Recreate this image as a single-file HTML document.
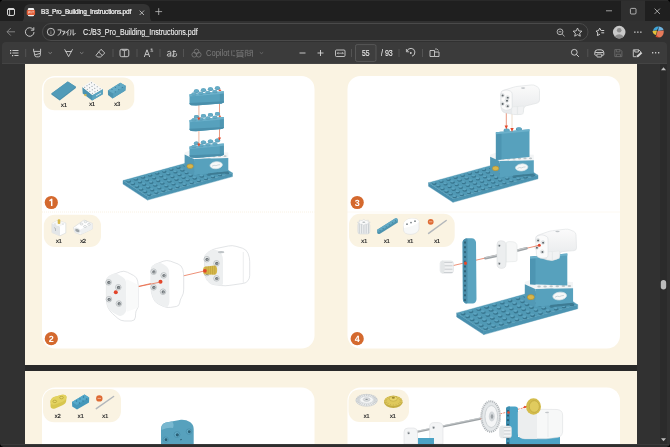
<!DOCTYPE html>
<html><head><meta charset="utf-8"><style>
html,body{margin:0;padding:0;width:670px;height:447px;overflow:hidden;background:#1f1f1f;font-family:'Liberation Sans', sans-serif}
svg{position:absolute;left:0;top:0}
</style></head><body>
<div style="position:absolute;left:0;top:0;width:670px;height:22px;background:#1f1f1f"></div>
<div style="position:absolute;left:621px;top:0;width:24px;height:21px;background:#2f2f2f"></div>
<div style="position:absolute;left:0;top:21px;width:670px;height:426px;background:#313131"></div>
<div style="position:absolute;left:24px;top:4px;width:126px;height:18px;background:#333333;border-radius:6px 6px 0 0"></div>
<div style="position:absolute;left:2px;top:42px;width:665px;height:403px;background:#313131;border-radius:4px;"></div>
<div style="position:absolute;left:2px;top:42px;width:665px;height:21px;background:#3b3b3b;border-radius:4px 4px 0 0;border-bottom:1px solid #444"></div>
<div style="position:absolute;left:0;top:444px;width:670px;height:1px;background:#3a3a3a"></div>
<div style="position:absolute;left:0;top:445px;width:670px;height:2px;background:#2e2e2e"></div>
<svg width="670" height="447" viewBox="0 0 670 447" style="position:absolute;left:0;top:0;will-change:transform;text-rendering:geometricPrecision">
<defs><linearGradient id="wgrad" x1="0" y1="0" x2="0" y2="1"><stop offset="0" stop-color="#fbfbfb"/><stop offset="1" stop-color="#e6e8ea"/></linearGradient><clipPath id="vc"><rect x="3" y="64" width="657" height="380"/></clipPath></defs>
<g clip-path="url(#vc)">
<rect x="25" y="40" width="612" height="325" fill="#faf3e2"/>
<rect x="25" y="365" width="612" height="6" fill="#292929"/>
<rect x="25" y="371" width="612" height="100" fill="#faf3e2"/>
<rect x="42" y="76" width="272.5" height="272.5" rx="13" fill="#fff"/>
<rect x="347.5" y="76" width="272.5" height="272.5" rx="13" fill="#fff"/>
<rect x="42" y="387.5" width="272.5" height="200" rx="13" fill="#fff"/>
<rect x="347.5" y="387.5" width="272.5" height="200" rx="13" fill="#fff"/>
<rect x="43.5" y="77.4" width="90.8" height="32.8" rx="11" fill="#faf3e2"/>
<rect x="43.8" y="214.7" width="57.2" height="32.3" rx="11" fill="#faf3e2"/>
<rect x="349" y="213.8" width="105.7" height="33.2" rx="11" fill="#faf3e2"/>
<rect x="348.5" y="389.6" width="60.5" height="32.4" rx="11" fill="#faf3e2"/>
<rect x="43" y="389" width="78" height="33.3" rx="11" fill="#faf3e2"/>
<line x1="42" y1="212" x2="314.5" y2="212" stroke="#f9f2e4" stroke-width="1" stroke-dasharray="1 1"/>
<line x1="347.5" y1="212" x2="620" y2="212" stroke="#f9f2e4" stroke-width="1" stroke-dasharray="1 1"/>
<circle cx="51.3" cy="202.5" r="6.6" fill="#d4692e"/>
<path d="M49.5 200.9 L51.699999999999996 199.2 V206.0" fill="none" stroke="#fff" stroke-width="1.45" stroke-linejoin="round"/>
<circle cx="51.3" cy="338.7" r="6.6" fill="#d4692e"/>
<text x="51.3" y="341.9" text-anchor="middle" font-family="Liberation Sans" font-weight="bold" font-size="9" fill="#fff">2</text>
<circle cx="357.2" cy="202.5" r="6.6" fill="#d4692e"/>
<text x="357.2" y="205.7" text-anchor="middle" font-family="Liberation Sans" font-weight="bold" font-size="9" fill="#fff">3</text>
<circle cx="357.2" cy="338.7" r="6.6" fill="#d4692e"/>
<text x="357.2" y="341.9" text-anchor="middle" font-family="Liberation Sans" font-weight="bold" font-size="9" fill="#fff">4</text>
<polygon points="123.00,180.50 147.50,196.50 147.50,200.10 123.00,184.10" fill="#478ead" stroke="#478ead" stroke-width="0.4"/>
<polygon points="147.50,196.50 232.50,173.00 232.50,176.60 147.50,200.10" fill="#4c94b1" stroke="#4c94b1" stroke-width="0.4"/>
<polygon points="123.00,180.50 208.00,157.00 232.50,173.00 147.50,196.50" fill="#5099b5" stroke="#5099b5" stroke-width="0.3"/>
<ellipse cx="128.88" cy="181.20" rx="2.1" ry="1.5" fill="#37748d" opacity="0.95"/>
<ellipse cx="128.43" cy="180.40" rx="1.75" ry="1.05" fill="#5ca4c0"/>
<ellipse cx="132.97" cy="183.87" rx="2.1" ry="1.5" fill="#37748d" opacity="0.95"/>
<ellipse cx="132.52" cy="183.07" rx="1.75" ry="1.05" fill="#5ca4c0"/>
<ellipse cx="137.05" cy="186.54" rx="2.1" ry="1.5" fill="#37748d" opacity="0.95"/>
<ellipse cx="136.60" cy="185.74" rx="1.75" ry="1.05" fill="#5ca4c0"/>
<ellipse cx="141.13" cy="189.20" rx="2.1" ry="1.5" fill="#37748d" opacity="0.95"/>
<ellipse cx="140.68" cy="188.40" rx="1.75" ry="1.05" fill="#5ca4c0"/>
<ellipse cx="145.22" cy="191.87" rx="2.1" ry="1.5" fill="#37748d" opacity="0.95"/>
<ellipse cx="144.77" cy="191.07" rx="1.75" ry="1.05" fill="#5ca4c0"/>
<ellipse cx="149.30" cy="194.54" rx="2.1" ry="1.5" fill="#37748d" opacity="0.95"/>
<ellipse cx="148.85" cy="193.74" rx="1.75" ry="1.05" fill="#5ca4c0"/>
<ellipse cx="135.97" cy="179.25" rx="2.1" ry="1.5" fill="#37748d" opacity="0.95"/>
<ellipse cx="135.52" cy="178.45" rx="1.75" ry="1.05" fill="#5ca4c0"/>
<ellipse cx="140.05" cy="181.91" rx="2.1" ry="1.5" fill="#37748d" opacity="0.95"/>
<ellipse cx="139.60" cy="181.11" rx="1.75" ry="1.05" fill="#5ca4c0"/>
<ellipse cx="144.13" cy="184.58" rx="2.1" ry="1.5" fill="#37748d" opacity="0.95"/>
<ellipse cx="143.68" cy="183.78" rx="1.75" ry="1.05" fill="#5ca4c0"/>
<ellipse cx="148.22" cy="187.25" rx="2.1" ry="1.5" fill="#37748d" opacity="0.95"/>
<ellipse cx="147.77" cy="186.45" rx="1.75" ry="1.05" fill="#5ca4c0"/>
<ellipse cx="152.30" cy="189.91" rx="2.1" ry="1.5" fill="#37748d" opacity="0.95"/>
<ellipse cx="151.85" cy="189.11" rx="1.75" ry="1.05" fill="#5ca4c0"/>
<ellipse cx="156.38" cy="192.58" rx="2.1" ry="1.5" fill="#37748d" opacity="0.95"/>
<ellipse cx="155.93" cy="191.78" rx="1.75" ry="1.05" fill="#5ca4c0"/>
<ellipse cx="143.05" cy="177.29" rx="2.1" ry="1.5" fill="#37748d" opacity="0.95"/>
<ellipse cx="142.60" cy="176.49" rx="1.75" ry="1.05" fill="#5ca4c0"/>
<ellipse cx="147.13" cy="179.95" rx="2.1" ry="1.5" fill="#37748d" opacity="0.95"/>
<ellipse cx="146.68" cy="179.15" rx="1.75" ry="1.05" fill="#5ca4c0"/>
<ellipse cx="151.22" cy="182.62" rx="2.1" ry="1.5" fill="#37748d" opacity="0.95"/>
<ellipse cx="150.77" cy="181.82" rx="1.75" ry="1.05" fill="#5ca4c0"/>
<ellipse cx="155.30" cy="185.29" rx="2.1" ry="1.5" fill="#37748d" opacity="0.95"/>
<ellipse cx="154.85" cy="184.49" rx="1.75" ry="1.05" fill="#5ca4c0"/>
<ellipse cx="159.38" cy="187.95" rx="2.1" ry="1.5" fill="#37748d" opacity="0.95"/>
<ellipse cx="158.93" cy="187.15" rx="1.75" ry="1.05" fill="#5ca4c0"/>
<ellipse cx="163.47" cy="190.62" rx="2.1" ry="1.5" fill="#37748d" opacity="0.95"/>
<ellipse cx="163.02" cy="189.82" rx="1.75" ry="1.05" fill="#5ca4c0"/>
<ellipse cx="150.13" cy="175.33" rx="2.1" ry="1.5" fill="#37748d" opacity="0.95"/>
<ellipse cx="149.68" cy="174.53" rx="1.75" ry="1.05" fill="#5ca4c0"/>
<ellipse cx="154.22" cy="178.00" rx="2.1" ry="1.5" fill="#37748d" opacity="0.95"/>
<ellipse cx="153.77" cy="177.20" rx="1.75" ry="1.05" fill="#5ca4c0"/>
<ellipse cx="158.30" cy="180.66" rx="2.1" ry="1.5" fill="#37748d" opacity="0.95"/>
<ellipse cx="157.85" cy="179.86" rx="1.75" ry="1.05" fill="#5ca4c0"/>
<ellipse cx="162.38" cy="183.33" rx="2.1" ry="1.5" fill="#37748d" opacity="0.95"/>
<ellipse cx="161.93" cy="182.53" rx="1.75" ry="1.05" fill="#5ca4c0"/>
<ellipse cx="166.47" cy="186.00" rx="2.1" ry="1.5" fill="#37748d" opacity="0.95"/>
<ellipse cx="166.02" cy="185.20" rx="1.75" ry="1.05" fill="#5ca4c0"/>
<ellipse cx="170.55" cy="188.66" rx="2.1" ry="1.5" fill="#37748d" opacity="0.95"/>
<ellipse cx="170.10" cy="187.86" rx="1.75" ry="1.05" fill="#5ca4c0"/>
<ellipse cx="157.22" cy="173.37" rx="2.1" ry="1.5" fill="#37748d" opacity="0.95"/>
<ellipse cx="156.77" cy="172.57" rx="1.75" ry="1.05" fill="#5ca4c0"/>
<ellipse cx="161.30" cy="176.04" rx="2.1" ry="1.5" fill="#37748d" opacity="0.95"/>
<ellipse cx="160.85" cy="175.24" rx="1.75" ry="1.05" fill="#5ca4c0"/>
<ellipse cx="165.38" cy="178.70" rx="2.1" ry="1.5" fill="#37748d" opacity="0.95"/>
<ellipse cx="164.93" cy="177.90" rx="1.75" ry="1.05" fill="#5ca4c0"/>
<ellipse cx="169.47" cy="181.37" rx="2.1" ry="1.5" fill="#37748d" opacity="0.95"/>
<ellipse cx="169.02" cy="180.57" rx="1.75" ry="1.05" fill="#5ca4c0"/>
<ellipse cx="173.55" cy="184.04" rx="2.1" ry="1.5" fill="#37748d" opacity="0.95"/>
<ellipse cx="173.10" cy="183.24" rx="1.75" ry="1.05" fill="#5ca4c0"/>
<ellipse cx="177.63" cy="186.70" rx="2.1" ry="1.5" fill="#37748d" opacity="0.95"/>
<ellipse cx="177.18" cy="185.90" rx="1.75" ry="1.05" fill="#5ca4c0"/>
<ellipse cx="164.30" cy="171.41" rx="2.1" ry="1.5" fill="#37748d" opacity="0.95"/>
<ellipse cx="163.85" cy="170.61" rx="1.75" ry="1.05" fill="#5ca4c0"/>
<ellipse cx="168.38" cy="174.08" rx="2.1" ry="1.5" fill="#37748d" opacity="0.95"/>
<ellipse cx="167.93" cy="173.28" rx="1.75" ry="1.05" fill="#5ca4c0"/>
<ellipse cx="172.47" cy="176.75" rx="2.1" ry="1.5" fill="#37748d" opacity="0.95"/>
<ellipse cx="172.02" cy="175.95" rx="1.75" ry="1.05" fill="#5ca4c0"/>
<ellipse cx="176.55" cy="179.41" rx="2.1" ry="1.5" fill="#37748d" opacity="0.95"/>
<ellipse cx="176.10" cy="178.61" rx="1.75" ry="1.05" fill="#5ca4c0"/>
<ellipse cx="180.63" cy="182.08" rx="2.1" ry="1.5" fill="#37748d" opacity="0.95"/>
<ellipse cx="180.18" cy="181.28" rx="1.75" ry="1.05" fill="#5ca4c0"/>
<ellipse cx="184.72" cy="184.75" rx="2.1" ry="1.5" fill="#37748d" opacity="0.95"/>
<ellipse cx="184.27" cy="183.95" rx="1.75" ry="1.05" fill="#5ca4c0"/>
<ellipse cx="171.38" cy="169.45" rx="2.1" ry="1.5" fill="#37748d" opacity="0.95"/>
<ellipse cx="170.93" cy="168.65" rx="1.75" ry="1.05" fill="#5ca4c0"/>
<ellipse cx="175.47" cy="172.12" rx="2.1" ry="1.5" fill="#37748d" opacity="0.95"/>
<ellipse cx="175.02" cy="171.32" rx="1.75" ry="1.05" fill="#5ca4c0"/>
<ellipse cx="179.55" cy="174.79" rx="2.1" ry="1.5" fill="#37748d" opacity="0.95"/>
<ellipse cx="179.10" cy="173.99" rx="1.75" ry="1.05" fill="#5ca4c0"/>
<ellipse cx="183.63" cy="177.45" rx="2.1" ry="1.5" fill="#37748d" opacity="0.95"/>
<ellipse cx="183.18" cy="176.65" rx="1.75" ry="1.05" fill="#5ca4c0"/>
<ellipse cx="187.72" cy="180.12" rx="2.1" ry="1.5" fill="#37748d" opacity="0.95"/>
<ellipse cx="187.27" cy="179.32" rx="1.75" ry="1.05" fill="#5ca4c0"/>
<ellipse cx="191.80" cy="182.79" rx="2.1" ry="1.5" fill="#37748d" opacity="0.95"/>
<ellipse cx="191.35" cy="181.99" rx="1.75" ry="1.05" fill="#5ca4c0"/>
<ellipse cx="178.47" cy="167.50" rx="2.1" ry="1.5" fill="#37748d" opacity="0.95"/>
<ellipse cx="178.02" cy="166.70" rx="1.75" ry="1.05" fill="#5ca4c0"/>
<ellipse cx="182.55" cy="170.16" rx="2.1" ry="1.5" fill="#37748d" opacity="0.95"/>
<ellipse cx="182.10" cy="169.36" rx="1.75" ry="1.05" fill="#5ca4c0"/>
<ellipse cx="186.63" cy="172.83" rx="2.1" ry="1.5" fill="#37748d" opacity="0.95"/>
<ellipse cx="186.18" cy="172.03" rx="1.75" ry="1.05" fill="#5ca4c0"/>
<ellipse cx="190.72" cy="175.50" rx="2.1" ry="1.5" fill="#37748d" opacity="0.95"/>
<ellipse cx="190.27" cy="174.70" rx="1.75" ry="1.05" fill="#5ca4c0"/>
<ellipse cx="194.80" cy="178.16" rx="2.1" ry="1.5" fill="#37748d" opacity="0.95"/>
<ellipse cx="194.35" cy="177.36" rx="1.75" ry="1.05" fill="#5ca4c0"/>
<ellipse cx="198.88" cy="180.83" rx="2.1" ry="1.5" fill="#37748d" opacity="0.95"/>
<ellipse cx="198.43" cy="180.03" rx="1.75" ry="1.05" fill="#5ca4c0"/>
<ellipse cx="185.55" cy="165.54" rx="2.1" ry="1.5" fill="#37748d" opacity="0.95"/>
<ellipse cx="185.10" cy="164.74" rx="1.75" ry="1.05" fill="#5ca4c0"/>
<ellipse cx="189.63" cy="168.20" rx="2.1" ry="1.5" fill="#37748d" opacity="0.95"/>
<ellipse cx="189.18" cy="167.40" rx="1.75" ry="1.05" fill="#5ca4c0"/>
<ellipse cx="193.72" cy="170.87" rx="2.1" ry="1.5" fill="#37748d" opacity="0.95"/>
<ellipse cx="193.27" cy="170.07" rx="1.75" ry="1.05" fill="#5ca4c0"/>
<ellipse cx="197.80" cy="173.54" rx="2.1" ry="1.5" fill="#37748d" opacity="0.95"/>
<ellipse cx="197.35" cy="172.74" rx="1.75" ry="1.05" fill="#5ca4c0"/>
<ellipse cx="201.88" cy="176.20" rx="2.1" ry="1.5" fill="#37748d" opacity="0.95"/>
<ellipse cx="201.43" cy="175.40" rx="1.75" ry="1.05" fill="#5ca4c0"/>
<ellipse cx="205.97" cy="178.87" rx="2.1" ry="1.5" fill="#37748d" opacity="0.95"/>
<ellipse cx="205.52" cy="178.07" rx="1.75" ry="1.05" fill="#5ca4c0"/>
<ellipse cx="192.63" cy="163.58" rx="2.1" ry="1.5" fill="#37748d" opacity="0.95"/>
<ellipse cx="192.18" cy="162.78" rx="1.75" ry="1.05" fill="#5ca4c0"/>
<ellipse cx="196.72" cy="166.25" rx="2.1" ry="1.5" fill="#37748d" opacity="0.95"/>
<ellipse cx="196.27" cy="165.45" rx="1.75" ry="1.05" fill="#5ca4c0"/>
<ellipse cx="200.80" cy="168.91" rx="2.1" ry="1.5" fill="#37748d" opacity="0.95"/>
<ellipse cx="200.35" cy="168.11" rx="1.75" ry="1.05" fill="#5ca4c0"/>
<ellipse cx="204.88" cy="171.58" rx="2.1" ry="1.5" fill="#37748d" opacity="0.95"/>
<ellipse cx="204.43" cy="170.78" rx="1.75" ry="1.05" fill="#5ca4c0"/>
<ellipse cx="208.97" cy="174.25" rx="2.1" ry="1.5" fill="#37748d" opacity="0.95"/>
<ellipse cx="208.52" cy="173.45" rx="1.75" ry="1.05" fill="#5ca4c0"/>
<ellipse cx="213.05" cy="176.91" rx="2.1" ry="1.5" fill="#37748d" opacity="0.95"/>
<ellipse cx="212.60" cy="176.11" rx="1.75" ry="1.05" fill="#5ca4c0"/>
<ellipse cx="199.72" cy="161.62" rx="2.1" ry="1.5" fill="#37748d" opacity="0.95"/>
<ellipse cx="199.27" cy="160.82" rx="1.75" ry="1.05" fill="#5ca4c0"/>
<ellipse cx="203.80" cy="164.29" rx="2.1" ry="1.5" fill="#37748d" opacity="0.95"/>
<ellipse cx="203.35" cy="163.49" rx="1.75" ry="1.05" fill="#5ca4c0"/>
<ellipse cx="207.88" cy="166.95" rx="2.1" ry="1.5" fill="#37748d" opacity="0.95"/>
<ellipse cx="207.43" cy="166.15" rx="1.75" ry="1.05" fill="#5ca4c0"/>
<ellipse cx="211.97" cy="169.62" rx="2.1" ry="1.5" fill="#37748d" opacity="0.95"/>
<ellipse cx="211.52" cy="168.82" rx="1.75" ry="1.05" fill="#5ca4c0"/>
<ellipse cx="216.05" cy="172.29" rx="2.1" ry="1.5" fill="#37748d" opacity="0.95"/>
<ellipse cx="215.60" cy="171.49" rx="1.75" ry="1.05" fill="#5ca4c0"/>
<ellipse cx="220.13" cy="174.95" rx="2.1" ry="1.5" fill="#37748d" opacity="0.95"/>
<ellipse cx="219.68" cy="174.15" rx="1.75" ry="1.05" fill="#5ca4c0"/>
<ellipse cx="206.80" cy="159.66" rx="2.1" ry="1.5" fill="#37748d" opacity="0.95"/>
<ellipse cx="206.35" cy="158.86" rx="1.75" ry="1.05" fill="#5ca4c0"/>
<ellipse cx="210.88" cy="162.33" rx="2.1" ry="1.5" fill="#37748d" opacity="0.95"/>
<ellipse cx="210.43" cy="161.53" rx="1.75" ry="1.05" fill="#5ca4c0"/>
<ellipse cx="214.97" cy="165.00" rx="2.1" ry="1.5" fill="#37748d" opacity="0.95"/>
<ellipse cx="214.52" cy="164.20" rx="1.75" ry="1.05" fill="#5ca4c0"/>
<ellipse cx="219.05" cy="167.66" rx="2.1" ry="1.5" fill="#37748d" opacity="0.95"/>
<ellipse cx="218.60" cy="166.86" rx="1.75" ry="1.05" fill="#5ca4c0"/>
<ellipse cx="223.13" cy="170.33" rx="2.1" ry="1.5" fill="#37748d" opacity="0.95"/>
<ellipse cx="222.68" cy="169.53" rx="1.75" ry="1.05" fill="#5ca4c0"/>
<ellipse cx="227.22" cy="173.00" rx="2.1" ry="1.5" fill="#37748d" opacity="0.95"/>
<ellipse cx="226.77" cy="172.20" rx="1.75" ry="1.05" fill="#5ca4c0"/>
<polygon points="184.60,152.60 190.00,150.50 228.30,152.50 228.30,158.10 194.10,158.90 184.60,154.60" fill="#f3f5f6" />
<ellipse cx="197.50" cy="156.60" rx="1.6" ry="0.9" fill="#a9b3b7" opacity="0.75"/>
<ellipse cx="203.00" cy="156.50" rx="1.6" ry="0.9" fill="#a9b3b7" opacity="0.75"/>
<ellipse cx="208.50" cy="156.40" rx="1.6" ry="0.9" fill="#a9b3b7" opacity="0.75"/>
<ellipse cx="214.00" cy="156.30" rx="1.6" ry="0.9" fill="#a9b3b7" opacity="0.75"/>
<ellipse cx="219.50" cy="156.20" rx="1.6" ry="0.9" fill="#a9b3b7" opacity="0.75"/>
<ellipse cx="225.00" cy="156.10" rx="1.6" ry="0.9" fill="#a9b3b7" opacity="0.75"/>
<polygon points="184.60,154.60 194.10,158.90 194.10,175.20 184.60,170.40" fill="#5299b5" />
<polygon points="194.10,158.90 228.30,158.10 228.30,171.40 207.20,173.60 194.10,175.20" fill="#57a1bd" />
<polygon points="207.60,173.40 228.30,171.20 228.30,173.20 207.60,175.30" fill="#3d7b93" />
<ellipse cx="216.2" cy="165.2" rx="6.2" ry="3.5" transform="rotate(-6 216.2 165.2)" fill="#f6f8f8" stroke="#d5e3e8" stroke-width="0.7"/>
<path d="M212 166.2 q2 -1.5 4 -0.5 q2 -1 4 -1" stroke="#b0c2c9" stroke-width="0.6" fill="none"/>
<ellipse cx="190.1" cy="166.2" rx="3.2" ry="2.3" fill="#d9b64a" stroke="#a8852a" stroke-width="0.5"/>
<ellipse cx="196.50" cy="143.50" rx="2.7" ry="1.9" fill="#5a9db8"/>
<ellipse cx="196.30" cy="143.10" rx="2.4" ry="1.5" fill="#66acc6"/>
<ellipse cx="203.50" cy="142.50" rx="2.7" ry="1.9" fill="#5a9db8"/>
<ellipse cx="203.30" cy="142.10" rx="2.4" ry="1.5" fill="#66acc6"/>
<ellipse cx="210.50" cy="141.50" rx="2.7" ry="1.9" fill="#5a9db8"/>
<ellipse cx="210.30" cy="141.10" rx="2.4" ry="1.5" fill="#66acc6"/>
<ellipse cx="217.50" cy="140.50" rx="2.7" ry="1.9" fill="#5a9db8"/>
<ellipse cx="217.30" cy="140.10" rx="2.4" ry="1.5" fill="#66acc6"/>
<polygon points="189.50,146.60 223.80,143.60 223.80,154.70 221.50,155.70 196.00,157.90 191.00,157.50 189.50,156.30" fill="#57a1bd" />
<polygon points="189.50,146.60 223.80,143.60 223.80,145.70 219.80,146.30 189.50,148.90" fill="#6cb1cb" />
<polygon points="219.80,146.30 223.80,145.70 223.80,154.70 221.50,155.70 219.80,155.90" fill="#4f96b2" />
<polygon points="189.50,155.30 219.80,153.90 223.80,153.60 223.80,154.70 221.50,155.70 196.00,157.90 191.00,157.50 189.50,156.30" fill="#4a8fab" />
<ellipse cx="194.00" cy="146.50" rx="2.6" ry="1.6" fill="#5a9db8"/>
<ellipse cx="193.80" cy="146.10" rx="2.3" ry="1.2" fill="#66acc6"/>
<ellipse cx="201.00" cy="145.65" rx="2.6" ry="1.6" fill="#5a9db8"/>
<ellipse cx="200.80" cy="145.25" rx="2.3" ry="1.2" fill="#66acc6"/>
<ellipse cx="208.00" cy="144.80" rx="2.6" ry="1.6" fill="#5a9db8"/>
<ellipse cx="207.80" cy="144.40" rx="2.3" ry="1.2" fill="#66acc6"/>
<ellipse cx="215.00" cy="143.95" rx="2.6" ry="1.6" fill="#5a9db8"/>
<ellipse cx="214.80" cy="143.55" rx="2.3" ry="1.2" fill="#66acc6"/>
<line x1="198.9" y1="103.5" x2="198.9" y2="146" stroke="#eba386" stroke-width="0.8"/>
<line x1="219.5" y1="100.5" x2="219.5" y2="140" stroke="#e0704c" stroke-width="0.7"/>
<ellipse cx="196.50" cy="91.20" rx="2.7" ry="1.9" fill="#5a9db8"/>
<ellipse cx="196.30" cy="90.80" rx="2.4" ry="1.5" fill="#66acc6"/>
<ellipse cx="203.50" cy="90.20" rx="2.7" ry="1.9" fill="#5a9db8"/>
<ellipse cx="203.30" cy="89.80" rx="2.4" ry="1.5" fill="#66acc6"/>
<ellipse cx="210.50" cy="89.20" rx="2.7" ry="1.9" fill="#5a9db8"/>
<ellipse cx="210.30" cy="88.80" rx="2.4" ry="1.5" fill="#66acc6"/>
<ellipse cx="217.50" cy="88.20" rx="2.7" ry="1.9" fill="#5a9db8"/>
<ellipse cx="217.30" cy="87.80" rx="2.4" ry="1.5" fill="#66acc6"/>
<polygon points="189.50,94.30 223.80,91.30 223.80,102.40 221.50,103.40 196.00,105.60 191.00,105.20 189.50,104.00" fill="#57a1bd" />
<polygon points="189.50,94.30 223.80,91.30 223.80,93.40 219.80,94.00 189.50,96.60" fill="#6cb1cb" />
<polygon points="219.80,94.00 223.80,93.40 223.80,102.40 221.50,103.40 219.80,103.60" fill="#4f96b2" />
<polygon points="189.50,103.00 219.80,101.60 223.80,101.30 223.80,102.40 221.50,103.40 196.00,105.60 191.00,105.20 189.50,104.00" fill="#4a8fab" />
<ellipse cx="194.00" cy="94.20" rx="2.6" ry="1.6" fill="#5a9db8"/>
<ellipse cx="193.80" cy="93.80" rx="2.3" ry="1.2" fill="#66acc6"/>
<ellipse cx="201.00" cy="93.35" rx="2.6" ry="1.6" fill="#5a9db8"/>
<ellipse cx="200.80" cy="92.95" rx="2.3" ry="1.2" fill="#66acc6"/>
<ellipse cx="208.00" cy="92.50" rx="2.6" ry="1.6" fill="#5a9db8"/>
<ellipse cx="207.80" cy="92.10" rx="2.3" ry="1.2" fill="#66acc6"/>
<ellipse cx="215.00" cy="91.65" rx="2.6" ry="1.6" fill="#5a9db8"/>
<ellipse cx="214.80" cy="91.25" rx="2.3" ry="1.2" fill="#66acc6"/>
<ellipse cx="196.50" cy="116.90" rx="2.7" ry="1.9" fill="#5a9db8"/>
<ellipse cx="196.30" cy="116.50" rx="2.4" ry="1.5" fill="#66acc6"/>
<ellipse cx="203.50" cy="115.90" rx="2.7" ry="1.9" fill="#5a9db8"/>
<ellipse cx="203.30" cy="115.50" rx="2.4" ry="1.5" fill="#66acc6"/>
<ellipse cx="210.50" cy="114.90" rx="2.7" ry="1.9" fill="#5a9db8"/>
<ellipse cx="210.30" cy="114.50" rx="2.4" ry="1.5" fill="#66acc6"/>
<ellipse cx="217.50" cy="113.90" rx="2.7" ry="1.9" fill="#5a9db8"/>
<ellipse cx="217.30" cy="113.50" rx="2.4" ry="1.5" fill="#66acc6"/>
<polygon points="189.50,120.00 223.80,117.00 223.80,128.10 221.50,129.10 196.00,131.30 191.00,130.90 189.50,129.70" fill="#57a1bd" />
<polygon points="189.50,120.00 223.80,117.00 223.80,119.10 219.80,119.70 189.50,122.30" fill="#6cb1cb" />
<polygon points="219.80,119.70 223.80,119.10 223.80,128.10 221.50,129.10 219.80,129.30" fill="#4f96b2" />
<polygon points="189.50,128.70 219.80,127.30 223.80,127.00 223.80,128.10 221.50,129.10 196.00,131.30 191.00,130.90 189.50,129.70" fill="#4a8fab" />
<ellipse cx="194.00" cy="119.90" rx="2.6" ry="1.6" fill="#5a9db8"/>
<ellipse cx="193.80" cy="119.50" rx="2.3" ry="1.2" fill="#66acc6"/>
<ellipse cx="201.00" cy="119.05" rx="2.6" ry="1.6" fill="#5a9db8"/>
<ellipse cx="200.80" cy="118.65" rx="2.3" ry="1.2" fill="#66acc6"/>
<ellipse cx="208.00" cy="118.20" rx="2.6" ry="1.6" fill="#5a9db8"/>
<ellipse cx="207.80" cy="117.80" rx="2.3" ry="1.2" fill="#66acc6"/>
<ellipse cx="215.00" cy="117.35" rx="2.6" ry="1.6" fill="#5a9db8"/>
<ellipse cx="214.80" cy="116.95" rx="2.3" ry="1.2" fill="#66acc6"/>
<path d="M197.3 117.5 L200.5 117.5 L198.9 120.5 Z" fill="#e5482a"/>
<path d="M197.3 143.5 L200.5 143.5 L198.9 146.5 Z" fill="#e5482a"/>
<path d="M217.9 137.5 L221.1 137.5 L219.5 140.5 Z" fill="#e5482a"/>
<ellipse cx="219.9" cy="90.3" rx="1.4" ry="0.8" fill="#e64020"/>
<ellipse cx="219.9" cy="116.3" rx="1.2" ry="0.7" fill="#e06040"/>
<polygon points="51.40,93.40 67.80,81.40 75.90,86.70 75.90,88.00 59.70,100.60 51.40,94.60" fill="#4a8fab" />
<polygon points="51.40,93.40 67.80,81.40 75.90,86.70 59.70,99.30" fill="#519bb8" />
<polygon points="82.30,86.90 82.70,93.50 92.00,100.50 102.80,94.30 102.80,88.90 92.40,95.10" fill="#4a93b0" />
<polygon points="92.40,95.10 102.80,88.90 102.80,94.30 92.00,100.50" fill="#5aa4c0" />
<polygon points="82.30,86.90 91.20,81.10 102.80,88.90 92.40,95.10" fill="#f7f8f8" />
<circle cx="84.70" cy="87.19" r="0.55" fill="#7d8a90"/>
<circle cx="87.27" cy="89.23" r="0.55" fill="#7d8a90"/>
<circle cx="89.84" cy="91.27" r="0.55" fill="#7d8a90"/>
<circle cx="92.41" cy="93.31" r="0.55" fill="#7d8a90"/>
<circle cx="86.97" cy="85.73" r="0.55" fill="#7d8a90"/>
<circle cx="89.64" cy="87.74" r="0.55" fill="#7d8a90"/>
<circle cx="92.30" cy="89.76" r="0.55" fill="#7d8a90"/>
<circle cx="94.97" cy="91.77" r="0.55" fill="#7d8a90"/>
<circle cx="89.24" cy="84.27" r="0.55" fill="#7d8a90"/>
<circle cx="92.00" cy="86.26" r="0.55" fill="#7d8a90"/>
<circle cx="94.76" cy="88.24" r="0.55" fill="#7d8a90"/>
<circle cx="97.52" cy="90.23" r="0.55" fill="#7d8a90"/>
<circle cx="91.51" cy="82.81" r="0.55" fill="#7d8a90"/>
<circle cx="94.37" cy="84.77" r="0.55" fill="#7d8a90"/>
<circle cx="97.22" cy="86.73" r="0.55" fill="#7d8a90"/>
<circle cx="100.07" cy="88.69" r="0.55" fill="#7d8a90"/>
<ellipse cx="85.4" cy="95.1" rx="1.3" ry="1.1" fill="#d7b94c"/>
<path d="M96 96 L101 93" stroke="#e8eef0" stroke-width="0.8"/>
<polygon points="107.90,90.40 120.30,82.70 125.70,85.80 125.40,90.50 112.50,98.40 108.00,95.00" fill="#4d93af" />
<polygon points="113.30,93.50 125.70,85.80 125.40,90.50 112.50,98.40" fill="#57a1bd" />
<polygon points="107.90,90.40 120.30,82.70 125.70,85.80 113.30,93.50" fill="#63abc6" />
<circle cx="112" cy="89.5" r="0.6" fill="#2f7090" opacity="0.8"/>
<circle cx="115.5" cy="87.3" r="0.6" fill="#2f7090" opacity="0.8"/>
<circle cx="119" cy="85.1" r="0.6" fill="#2f7090" opacity="0.8"/>
<circle cx="115.3" cy="91.8" r="0.6" fill="#2f7090" opacity="0.8"/>
<circle cx="118.8" cy="89.6" r="0.6" fill="#2f7090" opacity="0.8"/>
<circle cx="122.3" cy="87.4" r="0.6" fill="#2f7090" opacity="0.8"/>
<text x="60.8" y="106.9" font-family="Liberation Sans" font-weight="bold" font-size="6" letter-spacing="-0.4" fill="#333333">x1</text>
<text x="88.9" y="106.3" font-family="Liberation Sans" font-weight="bold" font-size="6" letter-spacing="-0.4" fill="#333333">x1</text>
<text x="114.1" y="106.3" font-family="Liberation Sans" font-weight="bold" font-size="6" letter-spacing="-0.4" fill="#333333">x3</text>
<polygon points="52.00,223.50 57.50,220.50 65.80,223.00 65.80,233.00 60.00,235.80 52.00,232.50" fill="#ffffff" stroke="#d3d6d8" stroke-width="0.6" stroke-linejoin="round"/>
<polygon points="52.00,223.50 60.00,226.50 60.00,235.80 52.00,232.50" fill="#e3e6e8" />
<polygon points="52.00,223.50 57.50,220.50 65.80,223.00 60.00,226.50" fill="#f6f7f7" />
<rect x="57.7" y="219.2" width="2.6" height="4.8" rx="1" fill="#d7b94c"/>
<circle cx="55" cy="224" r="0.6" fill="#b8bcbf"/><circle cx="63" cy="224" r="0.6" fill="#b8bcbf"/>
<path d="M54 227.5 L55.5 228.5 L55.5 231" stroke="#9aa0a4" stroke-width="0.6" fill="none"/>
<polygon points="73.40,227.50 84.00,220.00 92.40,223.50 92.40,229.00 80.50,234.60 75.00,232.50" fill="#ffffff" stroke="#d3d6d8" stroke-width="0.6" stroke-linejoin="round"/>
<polygon points="80.50,229.50 92.40,223.50 92.40,229.00 80.50,234.60" fill="#eef0f1" />
<ellipse cx="77.3" cy="230.5" rx="3.3" ry="2.3" transform="rotate(25 77.3 230.5)" fill="#d8dcde" stroke="#eef0f1" stroke-width="0.6"/>
<ellipse cx="77.3" cy="230.5" rx="2.2" ry="1.3" transform="rotate(25 77.3 230.5)" fill="#9ba2a6"/>
<ellipse cx="81.5" cy="224" rx="1.5" ry="1" fill="#f7f8f8" stroke="#b9bec1" stroke-width="0.5"/>
<ellipse cx="85.5" cy="221.8" rx="1.5" ry="1" fill="#f7f8f8" stroke="#b9bec1" stroke-width="0.5"/>
<ellipse cx="85" cy="226.5" rx="1.5" ry="1" fill="#f7f8f8" stroke="#b9bec1" stroke-width="0.5"/>
<ellipse cx="89" cy="224.3" rx="1.5" ry="1" fill="#f7f8f8" stroke="#b9bec1" stroke-width="0.5"/>
<text x="55.7" y="242.6" font-family="Liberation Sans" font-weight="bold" font-size="6" letter-spacing="-0.4" fill="#333333">x1</text>
<text x="79.9" y="242.6" font-family="Liberation Sans" font-weight="bold" font-size="6" letter-spacing="-0.4" fill="#333333">x2</text>
<line x1="116" y1="291.7" x2="205" y2="270.8" stroke="#e5603c" stroke-width="0.7"/>
<path d="M204.41 259.10 Q204.30 255.10 207.55 252.77 L209.15 251.63 Q212.40 249.30 216.32 248.49 L228.28 246.01 Q232.20 245.20 236.04 246.32 L242.36 248.18 Q246.20 249.30 247.79 252.97 L248.11 253.73 Q249.70 257.40 249.70 261.40 L249.70 275.51 Q249.70 278.40 247.95 280.70 L247.95 280.70 Q246.20 283.00 243.34 283.41 L229.16 285.43 Q225.20 286.00 221.23 285.53 L214.07 284.67 Q210.10 284.20 207.71 280.99 L207.29 280.41 Q204.90 277.20 204.79 273.20 Z" fill="#ffffff" stroke="#d6d9db" stroke-width="0.7"/>
<path d="M204.38 258.10 Q204.30 255.10 206.74 253.35 L209.96 251.05 Q212.40 249.30 215.33 249.95 L217.07 250.35 Q220.00 251.00 221.34 253.68 L221.66 254.32 Q223.00 257.00 223.00 260.00 L223.00 282.70 Q223.00 285.70 220.02 285.35 L213.08 284.55 Q210.10 284.20 208.31 281.79 L206.69 279.61 Q204.90 277.20 204.82 274.20 Z" fill="#edeff0" />
<line x1="243.3" y1="252" x2="243.3" y2="283" stroke="#e4e7e8" stroke-width="0.7"/>
<ellipse cx="221.2" cy="252.2" rx="3.2" ry="1.1" fill="#c0c5c8"/>
<circle cx="206.80" cy="259.20" r="2.80" fill="#eceeef" stroke="#b3b8bb" stroke-width="0.75"/><circle cx="207.05" cy="259.40" r="1.68" fill="#6c7377"/><circle cx="207.35" cy="259.70" r="0.84" fill="#9ca1a4"/>
<circle cx="216.50" cy="263.30" r="2.80" fill="#eceeef" stroke="#b3b8bb" stroke-width="0.75"/><circle cx="216.75" cy="263.50" r="1.68" fill="#6c7377"/><circle cx="217.05" cy="263.80" r="0.84" fill="#9ca1a4"/>
<circle cx="206.80" cy="273.10" r="2.80" fill="#eceeef" stroke="#b3b8bb" stroke-width="0.75"/><circle cx="207.05" cy="273.30" r="1.68" fill="#6c7377"/><circle cx="207.35" cy="273.60" r="0.84" fill="#9ca1a4"/>
<circle cx="216.50" cy="278.40" r="2.80" fill="#eceeef" stroke="#b3b8bb" stroke-width="0.75"/><circle cx="216.75" cy="278.60" r="1.68" fill="#6c7377"/><circle cx="217.05" cy="278.90" r="0.84" fill="#9ca1a4"/>
<path d="M203.30 268.49 Q203.50 267.00 204.99 266.79 L214.15 265.49 Q215.50 265.30 216.30 266.40 L216.30 266.40 Q217.10 267.50 217.10 268.86 L217.10 271.06 Q217.10 272.50 216.30 273.70 L216.30 273.70 Q215.50 274.90 214.06 274.83 L205.00 274.37 Q203.50 274.30 203.36 272.81 L203.24 271.49 Q203.10 270.00 203.30 268.51 Z" fill="#d7b94c" />
<line x1="206.0" y1="266" x2="206.0" y2="274.5" stroke="#b39532" stroke-width="0.5"/>
<line x1="208.2" y1="266" x2="208.2" y2="274.5" stroke="#b39532" stroke-width="0.5"/>
<line x1="210.4" y1="266" x2="210.4" y2="274.5" stroke="#b39532" stroke-width="0.5"/>
<line x1="212.6" y1="266" x2="212.6" y2="274.5" stroke="#b39532" stroke-width="0.5"/>
<line x1="214.8" y1="266" x2="214.8" y2="274.5" stroke="#b39532" stroke-width="0.5"/>
<circle cx="204.9" cy="270.8" r="1.9" fill="#e2452a"/>
<path d="M151.10 270.00 Q151.10 266.00 154.82 264.53 L163.08 261.27 Q166.80 259.80 170.55 261.20 L178.05 264.00 Q181.80 265.40 182.71 269.29 L182.79 269.61 Q183.70 273.50 183.70 277.50 L183.70 289.95 Q183.70 293.60 181.85 296.75 L181.55 297.25 Q180.00 299.90 179.65 302.95 L179.65 302.95 Q179.30 306.00 176.27 306.49 L170.75 307.37 Q166.80 308.00 163.18 306.30 L158.52 304.10 Q154.90 302.40 153.49 298.66 L152.51 296.04 Q151.10 292.30 151.10 288.30 Z" fill="#ffffff" stroke="#d6d9db" stroke-width="0.7"/>
<path d="M151.10 270.00 Q151.10 266.00 154.75 264.36 L156.35 263.64 Q160.00 262.00 163.33 264.22 L165.67 265.78 Q169.00 268.00 169.06 272.00 L169.47 301.59 Q169.50 304.00 168.15 306.00 L168.15 306.00 Q166.80 308.00 164.62 306.97 L158.52 304.10 Q154.90 302.40 153.49 298.66 L152.51 296.04 Q151.10 292.30 151.10 288.30 Z" fill="#eef0f1" />
<circle cx="153.60" cy="271.70" r="2.80" fill="#eceeef" stroke="#b3b8bb" stroke-width="0.75"/><circle cx="153.85" cy="271.90" r="1.68" fill="#6c7377"/><circle cx="154.15" cy="272.20" r="0.84" fill="#9ca1a4"/>
<circle cx="163.70" cy="275.40" r="2.80" fill="#eceeef" stroke="#b3b8bb" stroke-width="0.75"/><circle cx="163.95" cy="275.60" r="1.68" fill="#6c7377"/><circle cx="164.25" cy="275.90" r="0.84" fill="#9ca1a4"/>
<circle cx="153.60" cy="287.30" r="2.80" fill="#eceeef" stroke="#b3b8bb" stroke-width="0.75"/><circle cx="153.85" cy="287.50" r="1.68" fill="#6c7377"/><circle cx="154.15" cy="287.80" r="0.84" fill="#9ca1a4"/>
<circle cx="163.00" cy="291.70" r="2.80" fill="#eceeef" stroke="#b3b8bb" stroke-width="0.75"/><circle cx="163.25" cy="291.90" r="1.68" fill="#6c7377"/><circle cx="163.55" cy="292.20" r="0.84" fill="#9ca1a4"/>
<circle cx="160.5" cy="281.7" r="2" fill="#e2452a"/>
<line x1="139" y1="286.5" x2="160.7" y2="282" stroke="#e5603c" stroke-width="0.7"/>
<path d="M106.40 281.30 Q106.40 277.30 110.12 275.83 L120.18 271.87 Q123.90 270.40 127.44 272.25 L133.73 275.54 Q137.10 277.30 137.70 281.05 L137.70 281.05 Q138.30 284.80 138.30 288.60 L138.30 305.21 Q138.30 307.40 137.05 309.20 L137.05 309.20 Q135.80 311.00 135.67 313.19 L135.44 317.01 Q135.20 321.00 131.20 321.00 L124.80 321.00 Q120.80 321.00 117.80 318.35 L112.50 313.65 Q109.50 311.00 107.95 307.31 L107.95 307.29 Q106.40 303.60 106.40 299.60 Z" fill="#ffffff" stroke="#d6d9db" stroke-width="0.7"/>
<path d="M106.40 281.30 Q106.40 277.30 109.89 275.35 L111.51 274.45 Q115.00 272.50 118.44 274.53 L122.56 276.97 Q126.00 279.00 126.06 283.00 L126.44 308.28 Q126.50 312.00 123.75 314.50 L123.75 314.50 Q121.00 317.00 117.70 315.28 L113.05 312.85 Q109.50 311.00 107.95 307.31 L107.95 307.29 Q106.40 303.60 106.40 299.60 Z" fill="#eef0f1" />
<path d="M126.03 281.00 Q126.00 279.00 127.81 279.85 L136.49 283.95 Q138.30 284.80 138.30 286.80 L138.30 305.40 Q138.30 307.40 136.44 308.13 L128.36 311.27 Q126.50 312.00 126.47 310.00 Z" fill="#f9fafa" />
<circle cx="108.60" cy="282.30" r="2.80" fill="#eceeef" stroke="#b3b8bb" stroke-width="0.75"/><circle cx="108.85" cy="282.50" r="1.68" fill="#6c7377"/><circle cx="109.15" cy="282.80" r="0.84" fill="#9ca1a4"/>
<circle cx="118.30" cy="287.30" r="2.80" fill="#eceeef" stroke="#b3b8bb" stroke-width="0.75"/><circle cx="118.55" cy="287.50" r="1.68" fill="#6c7377"/><circle cx="118.85" cy="287.80" r="0.84" fill="#9ca1a4"/>
<circle cx="108.90" cy="299.20" r="2.80" fill="#eceeef" stroke="#b3b8bb" stroke-width="0.75"/><circle cx="109.15" cy="299.40" r="1.68" fill="#6c7377"/><circle cx="109.45" cy="299.70" r="0.84" fill="#9ca1a4"/>
<circle cx="118.90" cy="303.60" r="2.80" fill="#eceeef" stroke="#b3b8bb" stroke-width="0.75"/><circle cx="119.15" cy="303.80" r="1.68" fill="#6c7377"/><circle cx="119.45" cy="304.10" r="0.84" fill="#9ca1a4"/>
<circle cx="115.8" cy="292.3" r="2" fill="#e2452a"/>
<g transform="translate(305.5,2.2)"><polygon points="123.00,180.50 147.50,196.50 147.50,200.10 123.00,184.10" fill="#478ead" stroke="#478ead" stroke-width="0.4"/>
<polygon points="147.50,196.50 232.50,173.00 232.50,176.60 147.50,200.10" fill="#4c94b1" stroke="#4c94b1" stroke-width="0.4"/>
<polygon points="123.00,180.50 208.00,157.00 232.50,173.00 147.50,196.50" fill="#5099b5" stroke="#5099b5" stroke-width="0.3"/>
<ellipse cx="128.88" cy="181.20" rx="2.1" ry="1.5" fill="#37748d" opacity="0.95"/>
<ellipse cx="128.43" cy="180.40" rx="1.75" ry="1.05" fill="#5ca4c0"/>
<ellipse cx="132.97" cy="183.87" rx="2.1" ry="1.5" fill="#37748d" opacity="0.95"/>
<ellipse cx="132.52" cy="183.07" rx="1.75" ry="1.05" fill="#5ca4c0"/>
<ellipse cx="137.05" cy="186.54" rx="2.1" ry="1.5" fill="#37748d" opacity="0.95"/>
<ellipse cx="136.60" cy="185.74" rx="1.75" ry="1.05" fill="#5ca4c0"/>
<ellipse cx="141.13" cy="189.20" rx="2.1" ry="1.5" fill="#37748d" opacity="0.95"/>
<ellipse cx="140.68" cy="188.40" rx="1.75" ry="1.05" fill="#5ca4c0"/>
<ellipse cx="145.22" cy="191.87" rx="2.1" ry="1.5" fill="#37748d" opacity="0.95"/>
<ellipse cx="144.77" cy="191.07" rx="1.75" ry="1.05" fill="#5ca4c0"/>
<ellipse cx="149.30" cy="194.54" rx="2.1" ry="1.5" fill="#37748d" opacity="0.95"/>
<ellipse cx="148.85" cy="193.74" rx="1.75" ry="1.05" fill="#5ca4c0"/>
<ellipse cx="135.97" cy="179.25" rx="2.1" ry="1.5" fill="#37748d" opacity="0.95"/>
<ellipse cx="135.52" cy="178.45" rx="1.75" ry="1.05" fill="#5ca4c0"/>
<ellipse cx="140.05" cy="181.91" rx="2.1" ry="1.5" fill="#37748d" opacity="0.95"/>
<ellipse cx="139.60" cy="181.11" rx="1.75" ry="1.05" fill="#5ca4c0"/>
<ellipse cx="144.13" cy="184.58" rx="2.1" ry="1.5" fill="#37748d" opacity="0.95"/>
<ellipse cx="143.68" cy="183.78" rx="1.75" ry="1.05" fill="#5ca4c0"/>
<ellipse cx="148.22" cy="187.25" rx="2.1" ry="1.5" fill="#37748d" opacity="0.95"/>
<ellipse cx="147.77" cy="186.45" rx="1.75" ry="1.05" fill="#5ca4c0"/>
<ellipse cx="152.30" cy="189.91" rx="2.1" ry="1.5" fill="#37748d" opacity="0.95"/>
<ellipse cx="151.85" cy="189.11" rx="1.75" ry="1.05" fill="#5ca4c0"/>
<ellipse cx="156.38" cy="192.58" rx="2.1" ry="1.5" fill="#37748d" opacity="0.95"/>
<ellipse cx="155.93" cy="191.78" rx="1.75" ry="1.05" fill="#5ca4c0"/>
<ellipse cx="143.05" cy="177.29" rx="2.1" ry="1.5" fill="#37748d" opacity="0.95"/>
<ellipse cx="142.60" cy="176.49" rx="1.75" ry="1.05" fill="#5ca4c0"/>
<ellipse cx="147.13" cy="179.95" rx="2.1" ry="1.5" fill="#37748d" opacity="0.95"/>
<ellipse cx="146.68" cy="179.15" rx="1.75" ry="1.05" fill="#5ca4c0"/>
<ellipse cx="151.22" cy="182.62" rx="2.1" ry="1.5" fill="#37748d" opacity="0.95"/>
<ellipse cx="150.77" cy="181.82" rx="1.75" ry="1.05" fill="#5ca4c0"/>
<ellipse cx="155.30" cy="185.29" rx="2.1" ry="1.5" fill="#37748d" opacity="0.95"/>
<ellipse cx="154.85" cy="184.49" rx="1.75" ry="1.05" fill="#5ca4c0"/>
<ellipse cx="159.38" cy="187.95" rx="2.1" ry="1.5" fill="#37748d" opacity="0.95"/>
<ellipse cx="158.93" cy="187.15" rx="1.75" ry="1.05" fill="#5ca4c0"/>
<ellipse cx="163.47" cy="190.62" rx="2.1" ry="1.5" fill="#37748d" opacity="0.95"/>
<ellipse cx="163.02" cy="189.82" rx="1.75" ry="1.05" fill="#5ca4c0"/>
<ellipse cx="150.13" cy="175.33" rx="2.1" ry="1.5" fill="#37748d" opacity="0.95"/>
<ellipse cx="149.68" cy="174.53" rx="1.75" ry="1.05" fill="#5ca4c0"/>
<ellipse cx="154.22" cy="178.00" rx="2.1" ry="1.5" fill="#37748d" opacity="0.95"/>
<ellipse cx="153.77" cy="177.20" rx="1.75" ry="1.05" fill="#5ca4c0"/>
<ellipse cx="158.30" cy="180.66" rx="2.1" ry="1.5" fill="#37748d" opacity="0.95"/>
<ellipse cx="157.85" cy="179.86" rx="1.75" ry="1.05" fill="#5ca4c0"/>
<ellipse cx="162.38" cy="183.33" rx="2.1" ry="1.5" fill="#37748d" opacity="0.95"/>
<ellipse cx="161.93" cy="182.53" rx="1.75" ry="1.05" fill="#5ca4c0"/>
<ellipse cx="166.47" cy="186.00" rx="2.1" ry="1.5" fill="#37748d" opacity="0.95"/>
<ellipse cx="166.02" cy="185.20" rx="1.75" ry="1.05" fill="#5ca4c0"/>
<ellipse cx="170.55" cy="188.66" rx="2.1" ry="1.5" fill="#37748d" opacity="0.95"/>
<ellipse cx="170.10" cy="187.86" rx="1.75" ry="1.05" fill="#5ca4c0"/>
<ellipse cx="157.22" cy="173.37" rx="2.1" ry="1.5" fill="#37748d" opacity="0.95"/>
<ellipse cx="156.77" cy="172.57" rx="1.75" ry="1.05" fill="#5ca4c0"/>
<ellipse cx="161.30" cy="176.04" rx="2.1" ry="1.5" fill="#37748d" opacity="0.95"/>
<ellipse cx="160.85" cy="175.24" rx="1.75" ry="1.05" fill="#5ca4c0"/>
<ellipse cx="165.38" cy="178.70" rx="2.1" ry="1.5" fill="#37748d" opacity="0.95"/>
<ellipse cx="164.93" cy="177.90" rx="1.75" ry="1.05" fill="#5ca4c0"/>
<ellipse cx="169.47" cy="181.37" rx="2.1" ry="1.5" fill="#37748d" opacity="0.95"/>
<ellipse cx="169.02" cy="180.57" rx="1.75" ry="1.05" fill="#5ca4c0"/>
<ellipse cx="173.55" cy="184.04" rx="2.1" ry="1.5" fill="#37748d" opacity="0.95"/>
<ellipse cx="173.10" cy="183.24" rx="1.75" ry="1.05" fill="#5ca4c0"/>
<ellipse cx="177.63" cy="186.70" rx="2.1" ry="1.5" fill="#37748d" opacity="0.95"/>
<ellipse cx="177.18" cy="185.90" rx="1.75" ry="1.05" fill="#5ca4c0"/>
<ellipse cx="164.30" cy="171.41" rx="2.1" ry="1.5" fill="#37748d" opacity="0.95"/>
<ellipse cx="163.85" cy="170.61" rx="1.75" ry="1.05" fill="#5ca4c0"/>
<ellipse cx="168.38" cy="174.08" rx="2.1" ry="1.5" fill="#37748d" opacity="0.95"/>
<ellipse cx="167.93" cy="173.28" rx="1.75" ry="1.05" fill="#5ca4c0"/>
<ellipse cx="172.47" cy="176.75" rx="2.1" ry="1.5" fill="#37748d" opacity="0.95"/>
<ellipse cx="172.02" cy="175.95" rx="1.75" ry="1.05" fill="#5ca4c0"/>
<ellipse cx="176.55" cy="179.41" rx="2.1" ry="1.5" fill="#37748d" opacity="0.95"/>
<ellipse cx="176.10" cy="178.61" rx="1.75" ry="1.05" fill="#5ca4c0"/>
<ellipse cx="180.63" cy="182.08" rx="2.1" ry="1.5" fill="#37748d" opacity="0.95"/>
<ellipse cx="180.18" cy="181.28" rx="1.75" ry="1.05" fill="#5ca4c0"/>
<ellipse cx="184.72" cy="184.75" rx="2.1" ry="1.5" fill="#37748d" opacity="0.95"/>
<ellipse cx="184.27" cy="183.95" rx="1.75" ry="1.05" fill="#5ca4c0"/>
<ellipse cx="171.38" cy="169.45" rx="2.1" ry="1.5" fill="#37748d" opacity="0.95"/>
<ellipse cx="170.93" cy="168.65" rx="1.75" ry="1.05" fill="#5ca4c0"/>
<ellipse cx="175.47" cy="172.12" rx="2.1" ry="1.5" fill="#37748d" opacity="0.95"/>
<ellipse cx="175.02" cy="171.32" rx="1.75" ry="1.05" fill="#5ca4c0"/>
<ellipse cx="179.55" cy="174.79" rx="2.1" ry="1.5" fill="#37748d" opacity="0.95"/>
<ellipse cx="179.10" cy="173.99" rx="1.75" ry="1.05" fill="#5ca4c0"/>
<ellipse cx="183.63" cy="177.45" rx="2.1" ry="1.5" fill="#37748d" opacity="0.95"/>
<ellipse cx="183.18" cy="176.65" rx="1.75" ry="1.05" fill="#5ca4c0"/>
<ellipse cx="187.72" cy="180.12" rx="2.1" ry="1.5" fill="#37748d" opacity="0.95"/>
<ellipse cx="187.27" cy="179.32" rx="1.75" ry="1.05" fill="#5ca4c0"/>
<ellipse cx="191.80" cy="182.79" rx="2.1" ry="1.5" fill="#37748d" opacity="0.95"/>
<ellipse cx="191.35" cy="181.99" rx="1.75" ry="1.05" fill="#5ca4c0"/>
<ellipse cx="178.47" cy="167.50" rx="2.1" ry="1.5" fill="#37748d" opacity="0.95"/>
<ellipse cx="178.02" cy="166.70" rx="1.75" ry="1.05" fill="#5ca4c0"/>
<ellipse cx="182.55" cy="170.16" rx="2.1" ry="1.5" fill="#37748d" opacity="0.95"/>
<ellipse cx="182.10" cy="169.36" rx="1.75" ry="1.05" fill="#5ca4c0"/>
<ellipse cx="186.63" cy="172.83" rx="2.1" ry="1.5" fill="#37748d" opacity="0.95"/>
<ellipse cx="186.18" cy="172.03" rx="1.75" ry="1.05" fill="#5ca4c0"/>
<ellipse cx="190.72" cy="175.50" rx="2.1" ry="1.5" fill="#37748d" opacity="0.95"/>
<ellipse cx="190.27" cy="174.70" rx="1.75" ry="1.05" fill="#5ca4c0"/>
<ellipse cx="194.80" cy="178.16" rx="2.1" ry="1.5" fill="#37748d" opacity="0.95"/>
<ellipse cx="194.35" cy="177.36" rx="1.75" ry="1.05" fill="#5ca4c0"/>
<ellipse cx="198.88" cy="180.83" rx="2.1" ry="1.5" fill="#37748d" opacity="0.95"/>
<ellipse cx="198.43" cy="180.03" rx="1.75" ry="1.05" fill="#5ca4c0"/>
<ellipse cx="185.55" cy="165.54" rx="2.1" ry="1.5" fill="#37748d" opacity="0.95"/>
<ellipse cx="185.10" cy="164.74" rx="1.75" ry="1.05" fill="#5ca4c0"/>
<ellipse cx="189.63" cy="168.20" rx="2.1" ry="1.5" fill="#37748d" opacity="0.95"/>
<ellipse cx="189.18" cy="167.40" rx="1.75" ry="1.05" fill="#5ca4c0"/>
<ellipse cx="193.72" cy="170.87" rx="2.1" ry="1.5" fill="#37748d" opacity="0.95"/>
<ellipse cx="193.27" cy="170.07" rx="1.75" ry="1.05" fill="#5ca4c0"/>
<ellipse cx="197.80" cy="173.54" rx="2.1" ry="1.5" fill="#37748d" opacity="0.95"/>
<ellipse cx="197.35" cy="172.74" rx="1.75" ry="1.05" fill="#5ca4c0"/>
<ellipse cx="201.88" cy="176.20" rx="2.1" ry="1.5" fill="#37748d" opacity="0.95"/>
<ellipse cx="201.43" cy="175.40" rx="1.75" ry="1.05" fill="#5ca4c0"/>
<ellipse cx="205.97" cy="178.87" rx="2.1" ry="1.5" fill="#37748d" opacity="0.95"/>
<ellipse cx="205.52" cy="178.07" rx="1.75" ry="1.05" fill="#5ca4c0"/>
<ellipse cx="192.63" cy="163.58" rx="2.1" ry="1.5" fill="#37748d" opacity="0.95"/>
<ellipse cx="192.18" cy="162.78" rx="1.75" ry="1.05" fill="#5ca4c0"/>
<ellipse cx="196.72" cy="166.25" rx="2.1" ry="1.5" fill="#37748d" opacity="0.95"/>
<ellipse cx="196.27" cy="165.45" rx="1.75" ry="1.05" fill="#5ca4c0"/>
<ellipse cx="200.80" cy="168.91" rx="2.1" ry="1.5" fill="#37748d" opacity="0.95"/>
<ellipse cx="200.35" cy="168.11" rx="1.75" ry="1.05" fill="#5ca4c0"/>
<ellipse cx="204.88" cy="171.58" rx="2.1" ry="1.5" fill="#37748d" opacity="0.95"/>
<ellipse cx="204.43" cy="170.78" rx="1.75" ry="1.05" fill="#5ca4c0"/>
<ellipse cx="208.97" cy="174.25" rx="2.1" ry="1.5" fill="#37748d" opacity="0.95"/>
<ellipse cx="208.52" cy="173.45" rx="1.75" ry="1.05" fill="#5ca4c0"/>
<ellipse cx="213.05" cy="176.91" rx="2.1" ry="1.5" fill="#37748d" opacity="0.95"/>
<ellipse cx="212.60" cy="176.11" rx="1.75" ry="1.05" fill="#5ca4c0"/>
<ellipse cx="199.72" cy="161.62" rx="2.1" ry="1.5" fill="#37748d" opacity="0.95"/>
<ellipse cx="199.27" cy="160.82" rx="1.75" ry="1.05" fill="#5ca4c0"/>
<ellipse cx="203.80" cy="164.29" rx="2.1" ry="1.5" fill="#37748d" opacity="0.95"/>
<ellipse cx="203.35" cy="163.49" rx="1.75" ry="1.05" fill="#5ca4c0"/>
<ellipse cx="207.88" cy="166.95" rx="2.1" ry="1.5" fill="#37748d" opacity="0.95"/>
<ellipse cx="207.43" cy="166.15" rx="1.75" ry="1.05" fill="#5ca4c0"/>
<ellipse cx="211.97" cy="169.62" rx="2.1" ry="1.5" fill="#37748d" opacity="0.95"/>
<ellipse cx="211.52" cy="168.82" rx="1.75" ry="1.05" fill="#5ca4c0"/>
<ellipse cx="216.05" cy="172.29" rx="2.1" ry="1.5" fill="#37748d" opacity="0.95"/>
<ellipse cx="215.60" cy="171.49" rx="1.75" ry="1.05" fill="#5ca4c0"/>
<ellipse cx="220.13" cy="174.95" rx="2.1" ry="1.5" fill="#37748d" opacity="0.95"/>
<ellipse cx="219.68" cy="174.15" rx="1.75" ry="1.05" fill="#5ca4c0"/>
<ellipse cx="206.80" cy="159.66" rx="2.1" ry="1.5" fill="#37748d" opacity="0.95"/>
<ellipse cx="206.35" cy="158.86" rx="1.75" ry="1.05" fill="#5ca4c0"/>
<ellipse cx="210.88" cy="162.33" rx="2.1" ry="1.5" fill="#37748d" opacity="0.95"/>
<ellipse cx="210.43" cy="161.53" rx="1.75" ry="1.05" fill="#5ca4c0"/>
<ellipse cx="214.97" cy="165.00" rx="2.1" ry="1.5" fill="#37748d" opacity="0.95"/>
<ellipse cx="214.52" cy="164.20" rx="1.75" ry="1.05" fill="#5ca4c0"/>
<ellipse cx="219.05" cy="167.66" rx="2.1" ry="1.5" fill="#37748d" opacity="0.95"/>
<ellipse cx="218.60" cy="166.86" rx="1.75" ry="1.05" fill="#5ca4c0"/>
<ellipse cx="223.13" cy="170.33" rx="2.1" ry="1.5" fill="#37748d" opacity="0.95"/>
<ellipse cx="222.68" cy="169.53" rx="1.75" ry="1.05" fill="#5ca4c0"/>
<ellipse cx="227.22" cy="173.00" rx="2.1" ry="1.5" fill="#37748d" opacity="0.95"/>
<ellipse cx="226.77" cy="172.20" rx="1.75" ry="1.05" fill="#5ca4c0"/>
<polygon points="184.60,152.60 190.00,150.50 228.30,152.50 228.30,158.10 194.10,158.90 184.60,154.60" fill="#f3f5f6" />
<ellipse cx="197.50" cy="156.60" rx="1.6" ry="0.9" fill="#a9b3b7" opacity="0.75"/>
<ellipse cx="203.00" cy="156.50" rx="1.6" ry="0.9" fill="#a9b3b7" opacity="0.75"/>
<ellipse cx="208.50" cy="156.40" rx="1.6" ry="0.9" fill="#a9b3b7" opacity="0.75"/>
<ellipse cx="214.00" cy="156.30" rx="1.6" ry="0.9" fill="#a9b3b7" opacity="0.75"/>
<ellipse cx="219.50" cy="156.20" rx="1.6" ry="0.9" fill="#a9b3b7" opacity="0.75"/>
<ellipse cx="225.00" cy="156.10" rx="1.6" ry="0.9" fill="#a9b3b7" opacity="0.75"/>
<polygon points="184.60,154.60 194.10,158.90 194.10,175.20 184.60,170.40" fill="#5299b5" />
<polygon points="194.10,158.90 228.30,158.10 228.30,171.40 207.20,173.60 194.10,175.20" fill="#57a1bd" />
<polygon points="207.60,173.40 228.30,171.20 228.30,173.20 207.60,175.30" fill="#3d7b93" />
<ellipse cx="216.2" cy="165.2" rx="6.2" ry="3.5" transform="rotate(-6 216.2 165.2)" fill="#f6f8f8" stroke="#d5e3e8" stroke-width="0.7"/>
<path d="M212 166.2 q2 -1.5 4 -0.5 q2 -1 4 -1" stroke="#b0c2c9" stroke-width="0.6" fill="none"/>
<ellipse cx="190.1" cy="166.2" rx="3.2" ry="2.3" fill="#d9b64a" stroke="#a8852a" stroke-width="0.5"/></g>
<ellipse cx="506.6" cy="130.5" rx="3" ry="1.8" fill="#4187a3"/>
<ellipse cx="506.6" cy="129.9" rx="2.8" ry="1.4" fill="#62a9c4"/>
<ellipse cx="518.9" cy="129.3" rx="3" ry="1.8" fill="#4187a3"/>
<ellipse cx="518.9" cy="128.70000000000002" rx="2.8" ry="1.4" fill="#62a9c4"/>
<polygon points="495.90,132.30 529.50,129.30 529.50,157.00 495.90,160.00" fill="#57a1bd" />
<polygon points="495.90,132.30 501.50,131.80 501.50,159.50 495.90,160.00" fill="#4d95b2" />
<polygon points="495.90,132.30 529.50,129.30 529.50,131.30 495.90,134.30" fill="#6cb1cb" />
<line x1="506.3" y1="113" x2="506.3" y2="127" stroke="#e06a48" stroke-width="0.7"/>
<line x1="512" y1="114" x2="512" y2="129" stroke="#ead9c5" stroke-width="0.9"/>
<path d="M504.6 125.6 L508 125.6 L506.3 129.2 Z" fill="#e5482a"/>
<path d="M510.3 128 L513.7 128 L512 132 Z" fill="#e5482a"/>
<path d="M501.00 93.60 Q501.00 91.10 503.39 90.36 L513.11 87.34 Q515.50 86.60 517.99 86.34 L531.31 84.96 Q533.80 84.70 535.95 85.98 L537.35 86.82 Q539.50 88.10 539.50 90.60 L539.50 100.00 Q539.50 102.50 537.07 103.11 L526.33 105.79 Q523.90 106.40 523.64 108.89 L523.36 111.51 Q523.10 114.00 520.62 114.30 L519.88 114.40 Q517.40 114.70 514.92 114.40 L514.18 114.30 Q511.70 114.00 509.24 113.57 L504.95 112.81 Q502.60 112.40 501.80 110.15 L501.80 110.15 Q501.00 107.90 501.00 105.51 Z" fill="url(#wgrad)" stroke="#dcdfe1" stroke-width="0.6"/>
<polygon points="511.70,107.00 517.40,106.50 517.40,114.70 511.70,114.00" fill="#f1f2f3" stroke="#dfe2e4" stroke-width="0.4"/>
<polygon points="517.60,106.50 523.90,106.00 523.10,114.00 517.60,114.70" fill="#f1f2f3" stroke="#dfe2e4" stroke-width="0.4"/>
<path d="M501.00 93.30 Q501.00 91.30 502.92 90.75 L505.08 90.15 Q507.00 89.60 508.82 90.44 L510.38 91.16 Q512.20 92.00 512.20 94.00 L512.20 106.80 Q512.20 108.80 510.28 109.36 L507.92 110.04 Q506.00 110.60 504.23 109.68 L502.77 108.92 Q501.00 108.00 501.00 106.00 Z" fill="#fbfbfb" stroke="#dadde0" stroke-width="0.6"/>
<circle cx="502.40" cy="95.30" r="1.9" fill="#eef0f1" stroke="#d0d4d6" stroke-width="0.5"/>
<circle cx="502.60" cy="95.50" r="1.05" fill="#62696d"/>
<circle cx="507.50" cy="97.60" r="1.9" fill="#eef0f1" stroke="#d0d4d6" stroke-width="0.5"/>
<circle cx="507.70" cy="97.80" r="1.05" fill="#62696d"/>
<circle cx="506.80" cy="100.60" r="1.9" fill="#eef0f1" stroke="#d0d4d6" stroke-width="0.5"/>
<circle cx="507.00" cy="100.80" r="1.05" fill="#62696d"/>
<circle cx="502.40" cy="103.70" r="1.9" fill="#eef0f1" stroke="#d0d4d6" stroke-width="0.5"/>
<circle cx="502.60" cy="103.90" r="1.05" fill="#62696d"/>
<circle cx="507.50" cy="106.00" r="1.9" fill="#eef0f1" stroke="#d0d4d6" stroke-width="0.5"/>
<circle cx="507.70" cy="106.20" r="1.05" fill="#62696d"/>
<ellipse cx="523.1" cy="88.1" rx="2.2" ry="0.8" fill="#c2c6c9"/>
<g transform="matrix(1.105,0,0,1.105,320.8,113.5)"><polygon points="123.00,180.50 147.50,196.50 147.50,200.10 123.00,184.10" fill="#478ead" stroke="#478ead" stroke-width="0.4"/>
<polygon points="147.50,196.50 232.50,173.00 232.50,176.60 147.50,200.10" fill="#4c94b1" stroke="#4c94b1" stroke-width="0.4"/>
<polygon points="123.00,180.50 208.00,157.00 232.50,173.00 147.50,196.50" fill="#5099b5" stroke="#5099b5" stroke-width="0.3"/>
<ellipse cx="128.88" cy="181.20" rx="2.1" ry="1.5" fill="#37748d" opacity="0.95"/>
<ellipse cx="128.43" cy="180.40" rx="1.75" ry="1.05" fill="#5ca4c0"/>
<ellipse cx="132.97" cy="183.87" rx="2.1" ry="1.5" fill="#37748d" opacity="0.95"/>
<ellipse cx="132.52" cy="183.07" rx="1.75" ry="1.05" fill="#5ca4c0"/>
<ellipse cx="137.05" cy="186.54" rx="2.1" ry="1.5" fill="#37748d" opacity="0.95"/>
<ellipse cx="136.60" cy="185.74" rx="1.75" ry="1.05" fill="#5ca4c0"/>
<ellipse cx="141.13" cy="189.20" rx="2.1" ry="1.5" fill="#37748d" opacity="0.95"/>
<ellipse cx="140.68" cy="188.40" rx="1.75" ry="1.05" fill="#5ca4c0"/>
<ellipse cx="145.22" cy="191.87" rx="2.1" ry="1.5" fill="#37748d" opacity="0.95"/>
<ellipse cx="144.77" cy="191.07" rx="1.75" ry="1.05" fill="#5ca4c0"/>
<ellipse cx="149.30" cy="194.54" rx="2.1" ry="1.5" fill="#37748d" opacity="0.95"/>
<ellipse cx="148.85" cy="193.74" rx="1.75" ry="1.05" fill="#5ca4c0"/>
<ellipse cx="135.97" cy="179.25" rx="2.1" ry="1.5" fill="#37748d" opacity="0.95"/>
<ellipse cx="135.52" cy="178.45" rx="1.75" ry="1.05" fill="#5ca4c0"/>
<ellipse cx="140.05" cy="181.91" rx="2.1" ry="1.5" fill="#37748d" opacity="0.95"/>
<ellipse cx="139.60" cy="181.11" rx="1.75" ry="1.05" fill="#5ca4c0"/>
<ellipse cx="144.13" cy="184.58" rx="2.1" ry="1.5" fill="#37748d" opacity="0.95"/>
<ellipse cx="143.68" cy="183.78" rx="1.75" ry="1.05" fill="#5ca4c0"/>
<ellipse cx="148.22" cy="187.25" rx="2.1" ry="1.5" fill="#37748d" opacity="0.95"/>
<ellipse cx="147.77" cy="186.45" rx="1.75" ry="1.05" fill="#5ca4c0"/>
<ellipse cx="152.30" cy="189.91" rx="2.1" ry="1.5" fill="#37748d" opacity="0.95"/>
<ellipse cx="151.85" cy="189.11" rx="1.75" ry="1.05" fill="#5ca4c0"/>
<ellipse cx="156.38" cy="192.58" rx="2.1" ry="1.5" fill="#37748d" opacity="0.95"/>
<ellipse cx="155.93" cy="191.78" rx="1.75" ry="1.05" fill="#5ca4c0"/>
<ellipse cx="143.05" cy="177.29" rx="2.1" ry="1.5" fill="#37748d" opacity="0.95"/>
<ellipse cx="142.60" cy="176.49" rx="1.75" ry="1.05" fill="#5ca4c0"/>
<ellipse cx="147.13" cy="179.95" rx="2.1" ry="1.5" fill="#37748d" opacity="0.95"/>
<ellipse cx="146.68" cy="179.15" rx="1.75" ry="1.05" fill="#5ca4c0"/>
<ellipse cx="151.22" cy="182.62" rx="2.1" ry="1.5" fill="#37748d" opacity="0.95"/>
<ellipse cx="150.77" cy="181.82" rx="1.75" ry="1.05" fill="#5ca4c0"/>
<ellipse cx="155.30" cy="185.29" rx="2.1" ry="1.5" fill="#37748d" opacity="0.95"/>
<ellipse cx="154.85" cy="184.49" rx="1.75" ry="1.05" fill="#5ca4c0"/>
<ellipse cx="159.38" cy="187.95" rx="2.1" ry="1.5" fill="#37748d" opacity="0.95"/>
<ellipse cx="158.93" cy="187.15" rx="1.75" ry="1.05" fill="#5ca4c0"/>
<ellipse cx="163.47" cy="190.62" rx="2.1" ry="1.5" fill="#37748d" opacity="0.95"/>
<ellipse cx="163.02" cy="189.82" rx="1.75" ry="1.05" fill="#5ca4c0"/>
<ellipse cx="150.13" cy="175.33" rx="2.1" ry="1.5" fill="#37748d" opacity="0.95"/>
<ellipse cx="149.68" cy="174.53" rx="1.75" ry="1.05" fill="#5ca4c0"/>
<ellipse cx="154.22" cy="178.00" rx="2.1" ry="1.5" fill="#37748d" opacity="0.95"/>
<ellipse cx="153.77" cy="177.20" rx="1.75" ry="1.05" fill="#5ca4c0"/>
<ellipse cx="158.30" cy="180.66" rx="2.1" ry="1.5" fill="#37748d" opacity="0.95"/>
<ellipse cx="157.85" cy="179.86" rx="1.75" ry="1.05" fill="#5ca4c0"/>
<ellipse cx="162.38" cy="183.33" rx="2.1" ry="1.5" fill="#37748d" opacity="0.95"/>
<ellipse cx="161.93" cy="182.53" rx="1.75" ry="1.05" fill="#5ca4c0"/>
<ellipse cx="166.47" cy="186.00" rx="2.1" ry="1.5" fill="#37748d" opacity="0.95"/>
<ellipse cx="166.02" cy="185.20" rx="1.75" ry="1.05" fill="#5ca4c0"/>
<ellipse cx="170.55" cy="188.66" rx="2.1" ry="1.5" fill="#37748d" opacity="0.95"/>
<ellipse cx="170.10" cy="187.86" rx="1.75" ry="1.05" fill="#5ca4c0"/>
<ellipse cx="157.22" cy="173.37" rx="2.1" ry="1.5" fill="#37748d" opacity="0.95"/>
<ellipse cx="156.77" cy="172.57" rx="1.75" ry="1.05" fill="#5ca4c0"/>
<ellipse cx="161.30" cy="176.04" rx="2.1" ry="1.5" fill="#37748d" opacity="0.95"/>
<ellipse cx="160.85" cy="175.24" rx="1.75" ry="1.05" fill="#5ca4c0"/>
<ellipse cx="165.38" cy="178.70" rx="2.1" ry="1.5" fill="#37748d" opacity="0.95"/>
<ellipse cx="164.93" cy="177.90" rx="1.75" ry="1.05" fill="#5ca4c0"/>
<ellipse cx="169.47" cy="181.37" rx="2.1" ry="1.5" fill="#37748d" opacity="0.95"/>
<ellipse cx="169.02" cy="180.57" rx="1.75" ry="1.05" fill="#5ca4c0"/>
<ellipse cx="173.55" cy="184.04" rx="2.1" ry="1.5" fill="#37748d" opacity="0.95"/>
<ellipse cx="173.10" cy="183.24" rx="1.75" ry="1.05" fill="#5ca4c0"/>
<ellipse cx="177.63" cy="186.70" rx="2.1" ry="1.5" fill="#37748d" opacity="0.95"/>
<ellipse cx="177.18" cy="185.90" rx="1.75" ry="1.05" fill="#5ca4c0"/>
<ellipse cx="164.30" cy="171.41" rx="2.1" ry="1.5" fill="#37748d" opacity="0.95"/>
<ellipse cx="163.85" cy="170.61" rx="1.75" ry="1.05" fill="#5ca4c0"/>
<ellipse cx="168.38" cy="174.08" rx="2.1" ry="1.5" fill="#37748d" opacity="0.95"/>
<ellipse cx="167.93" cy="173.28" rx="1.75" ry="1.05" fill="#5ca4c0"/>
<ellipse cx="172.47" cy="176.75" rx="2.1" ry="1.5" fill="#37748d" opacity="0.95"/>
<ellipse cx="172.02" cy="175.95" rx="1.75" ry="1.05" fill="#5ca4c0"/>
<ellipse cx="176.55" cy="179.41" rx="2.1" ry="1.5" fill="#37748d" opacity="0.95"/>
<ellipse cx="176.10" cy="178.61" rx="1.75" ry="1.05" fill="#5ca4c0"/>
<ellipse cx="180.63" cy="182.08" rx="2.1" ry="1.5" fill="#37748d" opacity="0.95"/>
<ellipse cx="180.18" cy="181.28" rx="1.75" ry="1.05" fill="#5ca4c0"/>
<ellipse cx="184.72" cy="184.75" rx="2.1" ry="1.5" fill="#37748d" opacity="0.95"/>
<ellipse cx="184.27" cy="183.95" rx="1.75" ry="1.05" fill="#5ca4c0"/>
<ellipse cx="171.38" cy="169.45" rx="2.1" ry="1.5" fill="#37748d" opacity="0.95"/>
<ellipse cx="170.93" cy="168.65" rx="1.75" ry="1.05" fill="#5ca4c0"/>
<ellipse cx="175.47" cy="172.12" rx="2.1" ry="1.5" fill="#37748d" opacity="0.95"/>
<ellipse cx="175.02" cy="171.32" rx="1.75" ry="1.05" fill="#5ca4c0"/>
<ellipse cx="179.55" cy="174.79" rx="2.1" ry="1.5" fill="#37748d" opacity="0.95"/>
<ellipse cx="179.10" cy="173.99" rx="1.75" ry="1.05" fill="#5ca4c0"/>
<ellipse cx="183.63" cy="177.45" rx="2.1" ry="1.5" fill="#37748d" opacity="0.95"/>
<ellipse cx="183.18" cy="176.65" rx="1.75" ry="1.05" fill="#5ca4c0"/>
<ellipse cx="187.72" cy="180.12" rx="2.1" ry="1.5" fill="#37748d" opacity="0.95"/>
<ellipse cx="187.27" cy="179.32" rx="1.75" ry="1.05" fill="#5ca4c0"/>
<ellipse cx="191.80" cy="182.79" rx="2.1" ry="1.5" fill="#37748d" opacity="0.95"/>
<ellipse cx="191.35" cy="181.99" rx="1.75" ry="1.05" fill="#5ca4c0"/>
<ellipse cx="178.47" cy="167.50" rx="2.1" ry="1.5" fill="#37748d" opacity="0.95"/>
<ellipse cx="178.02" cy="166.70" rx="1.75" ry="1.05" fill="#5ca4c0"/>
<ellipse cx="182.55" cy="170.16" rx="2.1" ry="1.5" fill="#37748d" opacity="0.95"/>
<ellipse cx="182.10" cy="169.36" rx="1.75" ry="1.05" fill="#5ca4c0"/>
<ellipse cx="186.63" cy="172.83" rx="2.1" ry="1.5" fill="#37748d" opacity="0.95"/>
<ellipse cx="186.18" cy="172.03" rx="1.75" ry="1.05" fill="#5ca4c0"/>
<ellipse cx="190.72" cy="175.50" rx="2.1" ry="1.5" fill="#37748d" opacity="0.95"/>
<ellipse cx="190.27" cy="174.70" rx="1.75" ry="1.05" fill="#5ca4c0"/>
<ellipse cx="194.80" cy="178.16" rx="2.1" ry="1.5" fill="#37748d" opacity="0.95"/>
<ellipse cx="194.35" cy="177.36" rx="1.75" ry="1.05" fill="#5ca4c0"/>
<ellipse cx="198.88" cy="180.83" rx="2.1" ry="1.5" fill="#37748d" opacity="0.95"/>
<ellipse cx="198.43" cy="180.03" rx="1.75" ry="1.05" fill="#5ca4c0"/>
<ellipse cx="185.55" cy="165.54" rx="2.1" ry="1.5" fill="#37748d" opacity="0.95"/>
<ellipse cx="185.10" cy="164.74" rx="1.75" ry="1.05" fill="#5ca4c0"/>
<ellipse cx="189.63" cy="168.20" rx="2.1" ry="1.5" fill="#37748d" opacity="0.95"/>
<ellipse cx="189.18" cy="167.40" rx="1.75" ry="1.05" fill="#5ca4c0"/>
<ellipse cx="193.72" cy="170.87" rx="2.1" ry="1.5" fill="#37748d" opacity="0.95"/>
<ellipse cx="193.27" cy="170.07" rx="1.75" ry="1.05" fill="#5ca4c0"/>
<ellipse cx="197.80" cy="173.54" rx="2.1" ry="1.5" fill="#37748d" opacity="0.95"/>
<ellipse cx="197.35" cy="172.74" rx="1.75" ry="1.05" fill="#5ca4c0"/>
<ellipse cx="201.88" cy="176.20" rx="2.1" ry="1.5" fill="#37748d" opacity="0.95"/>
<ellipse cx="201.43" cy="175.40" rx="1.75" ry="1.05" fill="#5ca4c0"/>
<ellipse cx="205.97" cy="178.87" rx="2.1" ry="1.5" fill="#37748d" opacity="0.95"/>
<ellipse cx="205.52" cy="178.07" rx="1.75" ry="1.05" fill="#5ca4c0"/>
<ellipse cx="192.63" cy="163.58" rx="2.1" ry="1.5" fill="#37748d" opacity="0.95"/>
<ellipse cx="192.18" cy="162.78" rx="1.75" ry="1.05" fill="#5ca4c0"/>
<ellipse cx="196.72" cy="166.25" rx="2.1" ry="1.5" fill="#37748d" opacity="0.95"/>
<ellipse cx="196.27" cy="165.45" rx="1.75" ry="1.05" fill="#5ca4c0"/>
<ellipse cx="200.80" cy="168.91" rx="2.1" ry="1.5" fill="#37748d" opacity="0.95"/>
<ellipse cx="200.35" cy="168.11" rx="1.75" ry="1.05" fill="#5ca4c0"/>
<ellipse cx="204.88" cy="171.58" rx="2.1" ry="1.5" fill="#37748d" opacity="0.95"/>
<ellipse cx="204.43" cy="170.78" rx="1.75" ry="1.05" fill="#5ca4c0"/>
<ellipse cx="208.97" cy="174.25" rx="2.1" ry="1.5" fill="#37748d" opacity="0.95"/>
<ellipse cx="208.52" cy="173.45" rx="1.75" ry="1.05" fill="#5ca4c0"/>
<ellipse cx="213.05" cy="176.91" rx="2.1" ry="1.5" fill="#37748d" opacity="0.95"/>
<ellipse cx="212.60" cy="176.11" rx="1.75" ry="1.05" fill="#5ca4c0"/>
<ellipse cx="199.72" cy="161.62" rx="2.1" ry="1.5" fill="#37748d" opacity="0.95"/>
<ellipse cx="199.27" cy="160.82" rx="1.75" ry="1.05" fill="#5ca4c0"/>
<ellipse cx="203.80" cy="164.29" rx="2.1" ry="1.5" fill="#37748d" opacity="0.95"/>
<ellipse cx="203.35" cy="163.49" rx="1.75" ry="1.05" fill="#5ca4c0"/>
<ellipse cx="207.88" cy="166.95" rx="2.1" ry="1.5" fill="#37748d" opacity="0.95"/>
<ellipse cx="207.43" cy="166.15" rx="1.75" ry="1.05" fill="#5ca4c0"/>
<ellipse cx="211.97" cy="169.62" rx="2.1" ry="1.5" fill="#37748d" opacity="0.95"/>
<ellipse cx="211.52" cy="168.82" rx="1.75" ry="1.05" fill="#5ca4c0"/>
<ellipse cx="216.05" cy="172.29" rx="2.1" ry="1.5" fill="#37748d" opacity="0.95"/>
<ellipse cx="215.60" cy="171.49" rx="1.75" ry="1.05" fill="#5ca4c0"/>
<ellipse cx="220.13" cy="174.95" rx="2.1" ry="1.5" fill="#37748d" opacity="0.95"/>
<ellipse cx="219.68" cy="174.15" rx="1.75" ry="1.05" fill="#5ca4c0"/>
<ellipse cx="206.80" cy="159.66" rx="2.1" ry="1.5" fill="#37748d" opacity="0.95"/>
<ellipse cx="206.35" cy="158.86" rx="1.75" ry="1.05" fill="#5ca4c0"/>
<ellipse cx="210.88" cy="162.33" rx="2.1" ry="1.5" fill="#37748d" opacity="0.95"/>
<ellipse cx="210.43" cy="161.53" rx="1.75" ry="1.05" fill="#5ca4c0"/>
<ellipse cx="214.97" cy="165.00" rx="2.1" ry="1.5" fill="#37748d" opacity="0.95"/>
<ellipse cx="214.52" cy="164.20" rx="1.75" ry="1.05" fill="#5ca4c0"/>
<ellipse cx="219.05" cy="167.66" rx="2.1" ry="1.5" fill="#37748d" opacity="0.95"/>
<ellipse cx="218.60" cy="166.86" rx="1.75" ry="1.05" fill="#5ca4c0"/>
<ellipse cx="223.13" cy="170.33" rx="2.1" ry="1.5" fill="#37748d" opacity="0.95"/>
<ellipse cx="222.68" cy="169.53" rx="1.75" ry="1.05" fill="#5ca4c0"/>
<ellipse cx="227.22" cy="173.00" rx="2.1" ry="1.5" fill="#37748d" opacity="0.95"/>
<ellipse cx="226.77" cy="172.20" rx="1.75" ry="1.05" fill="#5ca4c0"/>
<polygon points="184.60,152.60 190.00,150.50 228.30,152.50 228.30,158.10 194.10,158.90 184.60,154.60" fill="#f3f5f6" />
<ellipse cx="197.50" cy="156.60" rx="1.6" ry="0.9" fill="#a9b3b7" opacity="0.75"/>
<ellipse cx="203.00" cy="156.50" rx="1.6" ry="0.9" fill="#a9b3b7" opacity="0.75"/>
<ellipse cx="208.50" cy="156.40" rx="1.6" ry="0.9" fill="#a9b3b7" opacity="0.75"/>
<ellipse cx="214.00" cy="156.30" rx="1.6" ry="0.9" fill="#a9b3b7" opacity="0.75"/>
<ellipse cx="219.50" cy="156.20" rx="1.6" ry="0.9" fill="#a9b3b7" opacity="0.75"/>
<ellipse cx="225.00" cy="156.10" rx="1.6" ry="0.9" fill="#a9b3b7" opacity="0.75"/>
<polygon points="184.60,154.60 194.10,158.90 194.10,175.20 184.60,170.40" fill="#5299b5" />
<polygon points="194.10,158.90 228.30,158.10 228.30,171.40 207.20,173.60 194.10,175.20" fill="#57a1bd" />
<polygon points="207.60,173.40 228.30,171.20 228.30,173.20 207.60,175.30" fill="#3d7b93" />
<ellipse cx="216.2" cy="165.2" rx="6.2" ry="3.5" transform="rotate(-6 216.2 165.2)" fill="#f6f8f8" stroke="#d5e3e8" stroke-width="0.7"/>
<path d="M212 166.2 q2 -1.5 4 -0.5 q2 -1 4 -1" stroke="#b0c2c9" stroke-width="0.6" fill="none"/>
<ellipse cx="190.1" cy="166.2" rx="3.2" ry="2.3" fill="#d9b64a" stroke="#a8852a" stroke-width="0.5"/></g>
<polygon points="530.00,256.80 567.30,253.50 567.30,285.60 530.00,284.30" fill="#57a1bd" />
<polygon points="530.00,256.80 535.50,256.30 535.50,284.80 530.00,284.30" fill="#4d95b2" />
<polygon points="530.00,256.80 567.30,253.50 567.30,255.50 530.00,258.80" fill="#6cb1cb" />
<path d="M535.96 238.49 Q535.70 236.00 538.06 235.17 L547.64 231.83 Q550.00 231.00 552.48 230.71 L565.52 229.19 Q568.00 228.90 570.29 229.91 L573.61 231.39 Q575.90 232.40 576.00 234.90 L576.50 247.90 Q576.60 250.40 574.11 250.61 L562.59 251.59 Q560.10 251.80 559.83 254.29 L559.67 255.71 Q559.40 258.20 557.01 258.93 L554.59 259.67 Q552.20 260.40 549.72 260.10 L548.98 260.00 Q546.50 259.70 544.13 258.90 L540.27 257.60 Q537.90 256.80 537.64 254.31 Z" fill="url(#wgrad)" stroke="#dcdfe1" stroke-width="0.6"/>
<polygon points="546.50,252.00 552.30,251.50 552.20,260.40 546.50,259.70" fill="#f1f2f3" stroke="#dfe2e4" stroke-width="0.4"/>
<polygon points="552.50,251.50 559.60,251.00 559.40,258.20 552.50,260.40" fill="#f1f2f3" stroke="#dfe2e4" stroke-width="0.4"/>
<path d="M535.78 238.50 Q535.70 236.50 537.61 235.89 L540.09 235.11 Q542.00 234.50 543.85 235.27 L546.15 236.23 Q548.00 237.00 548.00 239.00 L548.00 255.50 Q548.00 257.50 546.02 257.78 L542.98 258.22 Q541.00 258.50 539.17 257.69 L538.33 257.31 Q536.50 256.50 536.42 254.50 Z" fill="#fbfbfb" stroke="#dadde0" stroke-width="0.6"/>
<circle cx="537.90" cy="240.30" r="1.9" fill="#eef0f1" stroke="#d0d4d6" stroke-width="0.5"/>
<circle cx="538.10" cy="240.50" r="1.05" fill="#62696d"/>
<circle cx="542.90" cy="242.50" r="1.9" fill="#eef0f1" stroke="#d0d4d6" stroke-width="0.5"/>
<circle cx="543.10" cy="242.70" r="1.05" fill="#62696d"/>
<circle cx="536.70" cy="247.50" r="1.9" fill="#eef0f1" stroke="#d0d4d6" stroke-width="0.5"/>
<circle cx="536.90" cy="247.70" r="1.05" fill="#62696d"/>
<circle cx="542.20" cy="251.80" r="1.9" fill="#eef0f1" stroke="#d0d4d6" stroke-width="0.5"/>
<circle cx="542.40" cy="252.00" r="1.05" fill="#62696d"/>
<ellipse cx="557.5" cy="231.5" rx="2.2" ry="0.8" fill="#c2c6c9"/>
<line x1="453" y1="265.6" x2="539.3" y2="245.3" stroke="#e5603c" stroke-width="0.7"/>
<circle cx="539.3" cy="245.3" r="1.5" fill="#e2452a"/>
<rect x="440.1" y="260.9" width="13.4" height="12.2" rx="2.5" fill="#f1f2f3" stroke="#d9dcde" stroke-width="0.5"/>
<line x1="442.6" y1="262.40" x2="452.5" y2="262.40" stroke="#b9bec1" stroke-width="0.7"/>
<line x1="442.6" y1="265.80" x2="452.5" y2="265.80" stroke="#b9bec1" stroke-width="0.7"/>
<line x1="442.6" y1="269.20" x2="452.5" y2="269.20" stroke="#b9bec1" stroke-width="0.7"/>
<line x1="442.6" y1="272.60" x2="452.5" y2="272.60" stroke="#b9bec1" stroke-width="0.7"/>
<ellipse cx="442.6" cy="267.0" rx="2.2" ry="6.6" fill="#e3e6e7"/>
<path d="M462.61 242.58 Q462.60 240.70 464.05 239.50 L464.05 239.50 Q465.50 238.30 467.38 238.25 L471.56 238.15 Q473.40 238.10 474.70 239.40 L474.70 239.40 Q476.00 240.70 476.02 242.54 L476.49 299.30 Q476.50 301.00 475.40 302.30 L475.40 302.30 Q474.30 303.60 472.60 303.60 L467.34 303.60 Q465.50 303.60 464.20 302.30 L464.20 302.30 Q462.90 301.00 462.89 299.16 Z" fill="#5aa4c0" />
<path d="M462.61 242.20 Q462.60 240.70 463.76 239.74 L464.73 238.94 Q465.50 238.30 466.50 238.40 L466.50 238.40 Q467.50 238.50 467.50 239.50 L467.50 302.60 Q467.50 303.60 466.50 303.60 L466.50 303.60 Q465.50 303.60 464.79 302.89 L463.96 302.06 Q462.90 301.00 462.89 299.50 Z" fill="#4a8eaa" />
<ellipse cx="465" cy="242.50" rx="0.9" ry="1.2" fill="#2c5f74"/>
<ellipse cx="465" cy="247.29" rx="0.9" ry="1.2" fill="#2c5f74"/>
<ellipse cx="465" cy="252.08" rx="0.9" ry="1.2" fill="#2c5f74"/>
<ellipse cx="465" cy="256.88" rx="0.9" ry="1.2" fill="#2c5f74"/>
<ellipse cx="465" cy="261.67" rx="0.9" ry="1.2" fill="#2c5f74"/>
<ellipse cx="465" cy="266.46" rx="0.9" ry="1.2" fill="#2c5f74"/>
<ellipse cx="465" cy="271.25" rx="0.9" ry="1.2" fill="#2c5f74"/>
<ellipse cx="465" cy="276.04" rx="0.9" ry="1.2" fill="#2c5f74"/>
<ellipse cx="465" cy="280.83" rx="0.9" ry="1.2" fill="#2c5f74"/>
<ellipse cx="465" cy="285.62" rx="0.9" ry="1.2" fill="#2c5f74"/>
<ellipse cx="465" cy="290.42" rx="0.9" ry="1.2" fill="#2c5f74"/>
<ellipse cx="465" cy="295.21" rx="0.9" ry="1.2" fill="#2c5f74"/>
<ellipse cx="465" cy="300.00" rx="0.9" ry="1.2" fill="#2c5f74"/>
<ellipse cx="465.5" cy="263.2" rx="1.5" ry="1.8" fill="#e5482a"/>
<line x1="485.4" y1="258.2" x2="500.6" y2="255" stroke="#9ea3a6" stroke-width="2.6" stroke-linecap="round"/>
<line x1="485.4" y1="257.6" x2="500.6" y2="254.4" stroke="#c9cdcf" stroke-width="0.9"/>
<line x1="517.6" y1="250.5" x2="526.5" y2="248.3" stroke="#9ea3a6" stroke-width="2.6" stroke-linecap="round"/>
<line x1="517.6" y1="249.9" x2="526.5" y2="247.7" stroke="#c9cdcf" stroke-width="0.9"/>
<path d="M506 244 Q506 241.6 509 241.6 L513 241.8 Q517.1 242.5 517.1 246 L517.1 260 Q517.1 261.5 515 261.5 L506 262 Z" fill="#f6f7f7" stroke="#dfe2e3" stroke-width="0.5"/>
<path d="M497 244.5 Q497 240.7 500.5 240.7 Q506 240.7 506 245 L506 264 Q506 268.4 501.5 268.4 Q497 268.4 497 264 Z" fill="#eceeef" stroke="#d6d9db" stroke-width="0.5"/>
<circle cx="499.20" cy="245.60" r="1.40" fill="#c6cacd"/><circle cx="499.40" cy="245.80" r="0.77" fill="#60676b"/>
<circle cx="499.20" cy="263.50" r="1.40" fill="#c6cacd"/><circle cx="499.40" cy="263.70" r="0.77" fill="#60676b"/>
<rect x="357.8" y="222.5" width="12" height="11.5" rx="2.5" fill="#eceeef" stroke="#d0d4d6" stroke-width="0.5"/>
<line x1="359.30" y1="223.5" x2="359.30" y2="233.5" stroke="#c3c8cb" stroke-width="0.8"/>
<line x1="361.60" y1="223.5" x2="361.60" y2="233.5" stroke="#c3c8cb" stroke-width="0.8"/>
<line x1="363.90" y1="223.5" x2="363.90" y2="233.5" stroke="#c3c8cb" stroke-width="0.8"/>
<line x1="366.20" y1="223.5" x2="366.20" y2="233.5" stroke="#c3c8cb" stroke-width="0.8"/>
<line x1="368.50" y1="223.5" x2="368.50" y2="233.5" stroke="#c3c8cb" stroke-width="0.8"/>
<polygon points="370.30,222.30 367.77,223.04 368.40,224.37 365.45,224.09 363.80,225.23 362.15,224.09 359.20,224.37 359.83,223.04 357.30,222.30 359.83,221.56 359.20,220.23 362.15,220.51 363.80,219.38 365.45,220.51 368.40,220.23 367.77,221.56" fill="#fafafa" stroke="#cfd3d6" stroke-width="0.5"/>
<ellipse cx="363.8" cy="222.3" rx="1.5" ry="0.8" fill="#b9bec1"/>
<path d="M377.2 229.8 L395 218.6 Q397.6 217.6 397.8 220.2 L397.8 222.4 L380 233.8 Q377.4 234.8 377.2 232.4 Z" fill="#4d93ae"/>
<path d="M377.2 229.8 L395 218.6 Q397.6 217.6 397.8 220.2 L379.8 231.6 Q377.4 232.4 377.2 229.8 Z" fill="#62a9c4"/>
<circle cx="380.00" cy="230.60" r="0.55" fill="#3b7b94"/>
<circle cx="383.10" cy="228.65" r="0.55" fill="#3b7b94"/>
<circle cx="386.20" cy="226.70" r="0.55" fill="#3b7b94"/>
<circle cx="389.30" cy="224.75" r="0.55" fill="#3b7b94"/>
<circle cx="392.40" cy="222.80" r="0.55" fill="#3b7b94"/>
<circle cx="395.50" cy="220.85" r="0.55" fill="#3b7b94"/>
<path d="M403.5 225 Q404 219.5 411 218.5 Q418.5 218 419 222 L419 229 Q418 233.8 411 234.4 Q404 234.5 403.5 230 Z" fill="#f7f8f8" stroke="#d8dbdd" stroke-width="0.5"/>
<path d="M403.5 225 Q404 219.5 411 218.5 Q418.5 218 419 222 Q414 226.5 404 228 Z" fill="#ffffff"/>
<circle cx="407" cy="224.2" r="0.9" fill="#7c8387"/>
<circle cx="411" cy="222.6" r="0.9" fill="#7c8387"/>
<circle cx="415" cy="221.2" r="0.9" fill="#7c8387"/>
<circle cx="430.7" cy="221.8" r="2.9" fill="#de6a33"/>
<path d="M429 221.8 H432.4" stroke="#f6d0bd" stroke-width="0.7"/>
<line x1="428.6" y1="233.4" x2="446.2" y2="220.5" stroke="#b3b7bb" stroke-width="1.5" stroke-linecap="round"/>
<text x="361" y="242.8" font-family="Liberation Sans" font-weight="bold" font-size="6" letter-spacing="-0.4" fill="#333333">x1</text>
<text x="383.7" y="242.8" font-family="Liberation Sans" font-weight="bold" font-size="6" letter-spacing="-0.4" fill="#333333">x1</text>
<text x="407.2" y="242.8" font-family="Liberation Sans" font-weight="bold" font-size="6" letter-spacing="-0.4" fill="#333333">x1</text>
<text x="433.9" y="242.8" font-family="Liberation Sans" font-weight="bold" font-size="6" letter-spacing="-0.4" fill="#333333">x1</text>
<path d="M50.5 402.5 Q50 399 54 397 L62 394.8 Q66.5 394 66.5 397.5 L66.2 401 Q66 403.5 62 405.5 L55 408.5 Q50.8 409.5 50.5 406 Z" fill="#d8c64e"/>
<path d="M50.5 402.5 Q50 399 54 397 L62 394.8 Q66.5 394 66.5 397.5 Q66 400 62 402 L55 404.5 Q51 405.5 50.5 402.5 Z" fill="#e3d25f"/>
<ellipse cx="54.8" cy="401.4" rx="1.8" ry="1.2" fill="#e8d86a" stroke="#a8952e" stroke-width="0.6"/><ellipse cx="61.5" cy="397.6" rx="1.8" ry="1.2" fill="#e8d86a" stroke="#a8952e" stroke-width="0.6"/>
<polygon points="72.00,402.00 84.50,394.50 89.20,397.50 89.00,402.50 77.00,409.60 72.20,406.50" fill="#4598ba" />
<polygon points="72.00,402.00 84.50,394.50 89.20,397.50 76.80,405.00" fill="#55a9ca" />
<circle cx="76.5" cy="401" r="0.7" fill="#2f7090" opacity="0.8"/>
<circle cx="80" cy="399" r="0.7" fill="#2f7090" opacity="0.8"/>
<circle cx="83.5" cy="397" r="0.7" fill="#2f7090" opacity="0.8"/>
<circle cx="79.5" cy="403" r="0.7" fill="#2f7090" opacity="0.8"/>
<circle cx="83" cy="401" r="0.7" fill="#2f7090" opacity="0.8"/>
<circle cx="86.5" cy="399" r="0.7" fill="#2f7090" opacity="0.8"/>
<circle cx="99.3" cy="398.4" r="3.2" fill="#de6a33"/>
<path d="M97.6 398.4 H101" stroke="#f6d0bd" stroke-width="0.7"/>
<line x1="96.3" y1="408.6" x2="113.6" y2="396.5" stroke="#b3b7bb" stroke-width="1.5" stroke-linecap="round"/>
<text x="54.5" y="418.2" font-family="Liberation Sans" font-weight="bold" font-size="6" letter-spacing="-0.4" fill="#333333">x2</text>
<text x="77.5" y="418.2" font-family="Liberation Sans" font-weight="bold" font-size="6" letter-spacing="-0.4" fill="#333333">x1</text>
<text x="102" y="418.2" font-family="Liberation Sans" font-weight="bold" font-size="6" letter-spacing="-0.4" fill="#333333">x1</text>
<ellipse cx="366.6" cy="400.3" rx="10.8" ry="6" fill="#e9ebec" stroke="#c5c9cc" stroke-width="0.6"/>
<line x1="373.80" y1="400.00" x2="377.20" y2="400.00" stroke="#b4b9bc" stroke-width="0.6"/>
<line x1="373.55" y1="401.01" x2="376.84" y2="401.50" stroke="#b4b9bc" stroke-width="0.6"/>
<line x1="372.84" y1="401.95" x2="375.78" y2="402.90" stroke="#b4b9bc" stroke-width="0.6"/>
<line x1="371.69" y1="402.76" x2="374.10" y2="404.10" stroke="#b4b9bc" stroke-width="0.6"/>
<line x1="370.20" y1="403.38" x2="371.90" y2="405.02" stroke="#b4b9bc" stroke-width="0.6"/>
<line x1="368.46" y1="403.77" x2="369.34" y2="405.60" stroke="#b4b9bc" stroke-width="0.6"/>
<line x1="366.60" y1="403.90" x2="366.60" y2="405.80" stroke="#b4b9bc" stroke-width="0.6"/>
<line x1="364.74" y1="403.77" x2="363.86" y2="405.60" stroke="#b4b9bc" stroke-width="0.6"/>
<line x1="363.00" y1="403.38" x2="361.30" y2="405.02" stroke="#b4b9bc" stroke-width="0.6"/>
<line x1="361.51" y1="402.76" x2="359.10" y2="404.10" stroke="#b4b9bc" stroke-width="0.6"/>
<line x1="360.36" y1="401.95" x2="357.42" y2="402.90" stroke="#b4b9bc" stroke-width="0.6"/>
<line x1="359.65" y1="401.01" x2="356.36" y2="401.50" stroke="#b4b9bc" stroke-width="0.6"/>
<line x1="359.40" y1="400.00" x2="356.00" y2="400.00" stroke="#b4b9bc" stroke-width="0.6"/>
<line x1="359.65" y1="398.99" x2="356.36" y2="398.50" stroke="#b4b9bc" stroke-width="0.6"/>
<line x1="360.36" y1="398.05" x2="357.42" y2="397.10" stroke="#b4b9bc" stroke-width="0.6"/>
<line x1="361.51" y1="397.24" x2="359.10" y2="395.90" stroke="#b4b9bc" stroke-width="0.6"/>
<line x1="363.00" y1="396.62" x2="361.30" y2="394.98" stroke="#b4b9bc" stroke-width="0.6"/>
<line x1="364.74" y1="396.23" x2="363.86" y2="394.40" stroke="#b4b9bc" stroke-width="0.6"/>
<line x1="366.60" y1="396.10" x2="366.60" y2="394.20" stroke="#b4b9bc" stroke-width="0.6"/>
<line x1="368.46" y1="396.23" x2="369.34" y2="394.40" stroke="#b4b9bc" stroke-width="0.6"/>
<line x1="370.20" y1="396.62" x2="371.90" y2="394.98" stroke="#b4b9bc" stroke-width="0.6"/>
<line x1="371.69" y1="397.24" x2="374.10" y2="395.90" stroke="#b4b9bc" stroke-width="0.6"/>
<line x1="372.84" y1="398.05" x2="375.78" y2="397.10" stroke="#b4b9bc" stroke-width="0.6"/>
<line x1="373.55" y1="398.99" x2="376.84" y2="398.50" stroke="#b4b9bc" stroke-width="0.6"/>
<ellipse cx="366.6" cy="399.8" rx="6.8" ry="3.6" fill="#f5f6f6" stroke="#c9cdd0" stroke-width="0.5"/>
<ellipse cx="366.6" cy="399.5" rx="3.4" ry="1.8" fill="#dfe2e4" stroke="#aeb3b6" stroke-width="0.5"/>
<ellipse cx="366.6" cy="399.4" rx="1.2" ry="0.7" fill="#8f9599"/>
<ellipse cx="393.3" cy="402.3" rx="9.3" ry="5.6" fill="#c4ad42"/>
<ellipse cx="393.3" cy="400.8" rx="9.1" ry="5.1" fill="#dfc95c"/>
<line x1="399.80" y1="400.80" x2="402.30" y2="400.80" stroke="#bda446" stroke-width="0.6"/>
<line x1="399.31" y1="402.18" x2="401.61" y2="402.71" stroke="#bda446" stroke-width="0.6"/>
<line x1="397.90" y1="403.35" x2="399.66" y2="404.34" stroke="#bda446" stroke-width="0.6"/>
<line x1="395.79" y1="404.13" x2="396.74" y2="405.42" stroke="#bda446" stroke-width="0.6"/>
<line x1="393.30" y1="404.40" x2="393.30" y2="405.80" stroke="#bda446" stroke-width="0.6"/>
<line x1="390.81" y1="404.13" x2="389.86" y2="405.42" stroke="#bda446" stroke-width="0.6"/>
<line x1="388.70" y1="403.35" x2="386.94" y2="404.34" stroke="#bda446" stroke-width="0.6"/>
<line x1="387.29" y1="402.18" x2="384.99" y2="402.71" stroke="#bda446" stroke-width="0.6"/>
<line x1="386.80" y1="400.80" x2="384.30" y2="400.80" stroke="#bda446" stroke-width="0.6"/>
<line x1="387.29" y1="399.42" x2="384.99" y2="398.89" stroke="#bda446" stroke-width="0.6"/>
<line x1="388.70" y1="398.25" x2="386.94" y2="397.26" stroke="#bda446" stroke-width="0.6"/>
<line x1="390.81" y1="397.47" x2="389.86" y2="396.18" stroke="#bda446" stroke-width="0.6"/>
<line x1="393.30" y1="397.20" x2="393.30" y2="395.80" stroke="#bda446" stroke-width="0.6"/>
<line x1="395.79" y1="397.47" x2="396.74" y2="396.18" stroke="#bda446" stroke-width="0.6"/>
<line x1="397.90" y1="398.25" x2="399.66" y2="397.26" stroke="#bda446" stroke-width="0.6"/>
<line x1="399.31" y1="399.42" x2="401.61" y2="398.89" stroke="#bda446" stroke-width="0.6"/>
<ellipse cx="393.3" cy="398.6" rx="4" ry="2.6" fill="#e8d46c" stroke="#b39d38" stroke-width="0.5"/>
<ellipse cx="393.3" cy="397.8" rx="1.6" ry="1" fill="#9e8a30"/>
<text x="363.4" y="417.8" font-family="Liberation Sans" font-weight="bold" font-size="6" letter-spacing="-0.4" fill="#333333">x1</text>
<text x="389.7" y="417.8" font-family="Liberation Sans" font-weight="bold" font-size="6" letter-spacing="-0.4" fill="#333333">x1</text>
<path d="M161 444 L161 429 Q161 423.5 166 422.5 L181 419.8 Q186 419.5 190 422 Q193.7 424.5 193.7 429 L193.7 444 Z" fill="#57a1bd"/>
<path d="M161.5 428 Q162 423.5 166 422.5 L172 421.5 Q174.5 423.5 173 428 Q168 427 161.5 430 Z" fill="#79b8d0"/>
<circle cx="177" cy="434.6" r="2.9" fill="#64adc9" stroke="#3f85a1" stroke-width="0.6"/>
<circle cx="177.3" cy="434.8" r="1.59" fill="#2a5f75"/>
<circle cx="189" cy="431.6" r="2.7" fill="#64adc9" stroke="#3f85a1" stroke-width="0.6"/>
<circle cx="189.3" cy="431.8" r="1.49" fill="#2a5f75"/>
<circle cx="165.7" cy="439.6" r="2.6" fill="#64adc9" stroke="#3f85a1" stroke-width="0.6"/>
<circle cx="166.0" cy="439.8" r="1.43" fill="#2a5f75"/>
<path d="M180 440 q1.2 -1 2 -0.2" stroke="#214f63" stroke-width="0.7" fill="none"/>
<line x1="416" y1="432" x2="480.6" y2="418.6" stroke="#9ea3a6" stroke-width="2.2"/>
<line x1="416" y1="431.4" x2="480.6" y2="418" stroke="#cdd1d3" stroke-width="0.7"/>
<line x1="480" y1="419" x2="527" y2="407" stroke="#e5603c" stroke-width="0.7" stroke-dasharray="2 1"/>
<path d="M404 432 Q404 428 408 428 L414 428 Q417.5 428.5 417.5 432 L417.5 444 L404 444 Z" fill="#f4f5f6" stroke="#d8dbdd" stroke-width="0.5"/>
<circle cx="408.50" cy="433.00" r="1.40" fill="#c6cacd"/><circle cx="408.70" cy="433.20" r="0.77" fill="#6a7175"/>
<path d="M429.6 427 Q429.6 422.6 434 422.6 L438.5 422.6 Q443 423 443 427 L443 444 L429.6 444 Z" fill="#f4f5f6" stroke="#d8dbdd" stroke-width="0.5"/>
<circle cx="433.50" cy="427.50" r="1.40" fill="#c6cacd"/><circle cx="433.70" cy="427.70" r="0.77" fill="#6a7175"/>
<rect x="418" y="438" width="16" height="6" fill="#4ca3c5"/>
<rect x="515" y="437" width="45" height="7" fill="#4ca3c5"/>
<ellipse cx="490.7" cy="416.5" rx="9.3" ry="15.3" fill="#e4e7e9" stroke="#aeb3b7" stroke-width="2" stroke-dasharray="1.1 0.9"/>
<ellipse cx="491.3" cy="416.5" rx="6.3" ry="11" fill="#f4f5f6" stroke="#c2c7ca" stroke-width="0.7"/>
<ellipse cx="491.8" cy="416.5" rx="3" ry="5" fill="#d3d7da"/>
<ellipse cx="492" cy="416.5" rx="1.3" ry="2.2" fill="#9ba1a5"/>
<path d="M506 444 L506 409 Q506 406.5 509 406.5 L515 406.5 Q518 406.5 518 409 L518 444 Z" fill="#4ca3c5"/>
<path d="M506 444 L506 409 Q506 406.5 509 406.5 L510 406.5 L510 444 Z" fill="#3f8fb0"/>
<ellipse cx="508" cy="411.0" rx="0.9" ry="1.1" fill="#22546a"/>
<ellipse cx="508" cy="415.6" rx="0.9" ry="1.1" fill="#22546a"/>
<ellipse cx="508" cy="420.2" rx="0.9" ry="1.1" fill="#22546a"/>
<ellipse cx="508" cy="424.8" rx="0.9" ry="1.1" fill="#22546a"/>
<ellipse cx="508" cy="429.4" rx="0.9" ry="1.1" fill="#22546a"/>
<ellipse cx="508" cy="434.0" rx="0.9" ry="1.1" fill="#22546a"/>
<ellipse cx="508" cy="438.6" rx="0.9" ry="1.1" fill="#22546a"/>
<ellipse cx="508" cy="443.2" rx="0.9" ry="1.1" fill="#22546a"/>
<circle cx="508.5" cy="412.5" r="1.3" fill="#e5482a"/>
<rect x="499.5" y="426" width="12" height="11.8" rx="2.5" fill="#f1f2f3" stroke="#d9dcde" stroke-width="0.5"/>
<line x1="502.0" y1="427.50" x2="510.5" y2="427.50" stroke="#b9bec1" stroke-width="0.7"/>
<line x1="502.0" y1="430.77" x2="510.5" y2="430.77" stroke="#b9bec1" stroke-width="0.7"/>
<line x1="502.0" y1="434.03" x2="510.5" y2="434.03" stroke="#b9bec1" stroke-width="0.7"/>
<line x1="502.0" y1="437.30" x2="510.5" y2="437.30" stroke="#b9bec1" stroke-width="0.7"/>
<ellipse cx="502.0" cy="431.9" rx="2.2" ry="6.4" fill="#e3e6e7"/>
<path d="M518 412 Q520 409 526 409 L557 409.5 Q562.6 410 562.6 415 L562.6 432 Q562 437 557 437.5 L546 438.8 L525 438.8 Q518 438.5 518 433 Z" fill="#f7f8f8" stroke="#d8dbdd" stroke-width="0.5"/>
<path d="M518 412 Q520 409 526 409 L534 409.2 Q537 411 537 415 L537 438.8 L525 438.8 Q518 438.5 518 433 Z" fill="#eceeef"/>
<line x1="548" y1="411" x2="548" y2="437" stroke="#e0e3e4" stroke-width="0.6"/>
<ellipse cx="547" cy="412.5" rx="2" ry="0.8" fill="#c2c6c9"/>
<ellipse cx="533.5" cy="406.5" rx="7.5" ry="8.2" fill="#d3bc4c"/>
<ellipse cx="534.3" cy="406.5" rx="5" ry="5.8" fill="#e0cb5e" stroke="#b39d38" stroke-width="0.5"/>
<path d="M526 406.8 L523 407.5" stroke="#e5482a" stroke-width="0.8"/><path d="M524 405.8 L527 406.7 L524.5 408.3 Z" fill="#e5482a"/>
</g>
<rect x="660" y="64" width="7" height="380" fill="#2b2b2b"/>
<rect x="660.8" y="280.1" width="5.4" height="9.4" rx="2.7" fill="#bdbdbd"/>
<path d="M661 70.2 L663.5 67.2 L666 70.2 Z" fill="#bdbdbd"/>
<path d="M661 438.3 L663.5 441.3 L666 438.3 Z" fill="#bdbdbd"/>
<path d="M0 0 H2.5 Q0.5 0.5 0 2.5 Z" fill="#000"/><path d="M670 0 H667.5 Q669.5 0.5 670 2.5 Z" fill="#000"/>
<path d="M0 447 H3.5 Q0.5 446.5 0 443.5 Z" fill="#000"/><path d="M670 447 H666.5 Q669.5 446.5 670 443.5 Z" fill="#000"/>
<rect x="7.5" y="8.5" width="7" height="7" rx="1.5" fill="none" stroke="#d6d6d6" stroke-width="1"/>
<line x1="9.6" y1="9.5" x2="9.6" y2="15.5" stroke="#d6d6d6" stroke-width="0.9"/>
<line x1="8" y1="9.4" x2="14" y2="9.4" stroke="#d6d6d6" stroke-width="1.2"/>
<rect x="27.9" y="8" width="6.2" height="8.2" rx="1.2" fill="#f2f2f2"/>
<rect x="26.7" y="10" width="8.4" height="4.9" rx="0.9" fill="#e2603a"/>
<path d="M28.6 13.6 V11.4 H30.2 V12.4 H28.6 M31.2 11.4 V13.4 M32.3 11.4 H34 M32.6 12.4 H33.6" stroke="#f8e0d6" stroke-width="0.55" fill="none"/>
<path d="M139.6 10.6 L144 15 M144 10.6 L139.6 15" stroke="#d0d0d0" stroke-width="0.8"/>
<path d="M158.7 8.2 V15 M155.3 11.6 H162.1" stroke="#c4c4c4" stroke-width="0.75"/>
<path d="M150 17 Q150 22 155 22 H150 Z" fill="#333333"/><path d="M24 17 Q24 22 19 22 H24 Z" fill="#333333"/>
<rect x="2" y="0" width="666" height="0.8" fill="#2c2c2c"/>
<path d="M606 10.8 H612" stroke="#dadada" stroke-width="0.7"/>
<rect x="630.4" y="8.4" width="5.6" height="5.6" rx="1.1" fill="none" stroke="#dadada" stroke-width="0.75"/>
<path d="M654.6 8.6 L659.9 13.9 M659.9 8.6 L654.6 13.9" stroke="#dadada" stroke-width="0.7"/>
<path d="M15 31.8 H7 M10.8 28 L7 31.8 L10.8 35.6" stroke="#8a8a8a" stroke-width="0.9" fill="none"/>
<path d="M33.2 29.5 A4.3 4.3 0 1 0 34 32" stroke="#d6d6d6" stroke-width="0.9" fill="none"/>
<path d="M33.8 27.3 V30.2 H30.9" stroke="#d6d6d6" stroke-width="0.9" fill="none"/>
<rect x="42.5" y="23.5" width="545.5" height="17" rx="8.5" fill="#2f2f2f" stroke="#4a4a4a" stroke-width="1"/>
<circle cx="50.9" cy="31.9" r="3.6" fill="none" stroke="#cfcfcf" stroke-width="0.9"/>
<path d="M50.9 31.2 V34" stroke="#9a9a9a" stroke-width="0.7"/><circle cx="50.9" cy="30" r="0.45" fill="#9a9a9a"/>
<path d="M57.6 29.9 H61.2 Q61 33.5 58 35.6" fill="none" stroke="#e4e4e4" stroke-width="0.85"/>
<path d="M62 31.3 H65 Q64.6 33.8 62.4 35.3 M63.6 32.6 V34.3" fill="none" stroke="#e4e4e4" stroke-width="0.8"/>
<path d="M69.2 29.4 Q67.8 31.8 65.6 33 M67.9 31.4 V35.6" fill="none" stroke="#e4e4e4" stroke-width="0.85"/>
<path d="M70.9 29.6 V32.5 Q70.8 34.5 69.9 35.5 M73.1 29.4 V35.2 Q74.5 34.5 75.6 33" fill="none" stroke="#e4e4e4" stroke-width="0.85"/>
<circle cx="560" cy="31.8" r="2.9" fill="none" stroke="#bdbdbd" stroke-width="0.9"/>
<path d="M562.2 34 L564.5 36.3 M558.6 31.8 H561.4" stroke="#bdbdbd" stroke-width="0.9"/>
<path d="M577.5 28 L578.8 30.9 L581.9 31.2 L579.6 33.2 L580.3 36.2 L577.5 34.6 L574.7 36.2 L575.4 33.2 L573.1 31.2 L576.2 30.9 Z" fill="none" stroke="#d6d6d6" stroke-width="0.85" stroke-linejoin="round"/>
<path d="M601.2 30.6 L599.7 28.2 L598.3 30.7 L596.1 31.1 L597.8 32.9 L597.4 35.6 L599.6 34.4" fill="none" stroke="#d6d6d6" stroke-width="0.95" stroke-linejoin="round" stroke-linecap="round"/>
<path d="M601.3 30.5 H604.2 M601.3 32.8 H604.2" stroke="#d6d6d6" stroke-width="0.95"/>
<circle cx="619.2" cy="32.1" r="6.3" fill="#c9c9c9"/>
<circle cx="619.2" cy="30.2" r="2.3" fill="#8d8d8d"/>
<path d="M614.6 36.4 Q619.2 31.9 623.8 36.4 A6.3 6.3 0 0 1 614.6 36.4 Z" fill="#8d8d8d"/>
<rect x="634.1999999999999" y="31.5" width="1.3" height="1.3" fill="#d6d6d6"/>
<rect x="637.1999999999999" y="31.5" width="1.3" height="1.3" fill="#d6d6d6"/>
<rect x="640.1999999999999" y="31.5" width="1.3" height="1.3" fill="#d6d6d6"/>
<path d="M653 31 Q654 26 659 26.5 L657 30 Z" fill="#3ea5d8"/>
<path d="M659 26.5 Q663 27 663.5 30 L658 31 Z" fill="#6fb3e0"/>
<path d="M652.5 31 L657 30.5 L656 35 Q653 34.5 652.5 31 Z" fill="#e3c23a"/>
<path d="M657.5 31 L663.8 30.5 Q664 36 660 37.5 L656 36.5 Z" fill="#e57a5a"/>
<path d="M656.5 35 L659 37.5 Q657 37.8 655.5 36.5 Z" fill="#d94a2a"/>
<line x1="25.7" y1="49" x2="25.7" y2="57" stroke="#5a5a5a" stroke-width="0.8"/>
<line x1="113" y1="49" x2="113" y2="57" stroke="#5a5a5a" stroke-width="0.8"/>
<line x1="137" y1="49" x2="137" y2="57" stroke="#5a5a5a" stroke-width="0.8"/>
<line x1="160" y1="49" x2="160" y2="57" stroke="#5a5a5a" stroke-width="0.8"/>
<line x1="183.5" y1="49" x2="183.5" y2="57" stroke="#5a5a5a" stroke-width="0.8"/>
<line x1="351.5" y1="49" x2="351.5" y2="57" stroke="#5a5a5a" stroke-width="0.8"/>
<line x1="399" y1="49" x2="399" y2="57" stroke="#5a5a5a" stroke-width="0.8"/>
<line x1="422.5" y1="49" x2="422.5" y2="57" stroke="#5a5a5a" stroke-width="0.8"/>
<line x1="587.8" y1="49" x2="587.8" y2="57" stroke="#5a5a5a" stroke-width="0.8"/>
<rect x="10" y="50.0" width="1.2" height="1.2" fill="#d6d6d6"/>
<line x1="12.4" y1="50.5" x2="18.5" y2="50.5" stroke="#d6d6d6" stroke-width="0.9"/>
<rect x="10" y="52.5" width="1.2" height="1.2" fill="#d6d6d6"/>
<line x1="12.4" y1="53" x2="18.5" y2="53" stroke="#d6d6d6" stroke-width="0.9"/>
<rect x="12" y="55.0" width="1.2" height="1.2" fill="#d6d6d6"/>
<line x1="14.4" y1="55.5" x2="18.5" y2="55.5" stroke="#d6d6d6" stroke-width="0.9"/>
<path d="M33.6 48.8 V51.4 H40.6 V48.8 M34 51.4 L34.8 55.6 Q35 56.8 36.5 56.8 H38.5 Q40 56.8 40.2 55.6 L40.6 51.4 M34.7 55 L40.1 53.4" fill="none" stroke="#d6d6d6" stroke-width="0.85"/>
<path d="M48.5 52.3 L50.2 53.6 L51.9 52.3" fill="none" stroke="#9a9a9a" stroke-width="0.7"/>
<path d="M64.6 49.2 L68.6 56.6 L72.6 49.2 M65.6 51.5 H71.6" fill="none" stroke="#d6d6d6" stroke-width="0.85" stroke-linejoin="round"/>
<path d="M80 52.3 L81.7 53.6 L83.4 52.3" fill="none" stroke="#9a9a9a" stroke-width="0.7"/>
<path d="M101 49.3 L104.8 53 L100.5 57 L97.5 57 L96 55.3 Z M98.5 51.8 L102.2 55.5" fill="none" stroke="#d6d6d6" stroke-width="0.85" stroke-linejoin="round"/>
<rect x="120" y="49.3" width="8.8" height="7.4" rx="1.6" fill="none" stroke="#d6d6d6" stroke-width="0.9"/>
<path d="M124.4 50.5 V56.5 M121.5 49.9 Q124.4 51.3 127.3 49.9" fill="none" stroke="#d6d6d6" stroke-width="0.8"/>
<path d="M144.3 57 L147 49.8 L149.7 57 M145.3 54.6 H148.7" fill="none" stroke="#d6d6d6" stroke-width="0.9"/>
<path d="M150.6 49.2 H152.8 M151.4 48.6 Q151.6 50.8 150.8 51.8 M152.6 50.3 Q153.6 51.8 151.4 51.6" fill="none" stroke="#d6d6d6" stroke-width="0.6"/>

<path d="M167.3 52 Q169.5 50.5 170.8 52 V56.5 M170.8 53.8 Q167 53.4 167 55.2 Q167.3 57 170.8 55.8" fill="none" stroke="#d6d6d6" stroke-width="0.85"/>
<path d="M172.5 51.5 H176 M174 50 Q173.7 54.5 172.4 56.6 M176.2 53.3 Q177.8 56.8 173.5 56.7 Q172.5 55 175 53.3" fill="none" stroke="#d6d6d6" stroke-width="0.8"/>
<circle cx="196.5" cy="51.6" r="2.4" fill="none" stroke="#7a7a7a" stroke-width="0.8"/>
<circle cx="194.3" cy="54.7" r="2.4" fill="none" stroke="#7a7a7a" stroke-width="0.8"/>
<circle cx="198.7" cy="54.7" r="2.4" fill="none" stroke="#7a7a7a" stroke-width="0.8"/>
<path d="M259.8 52.3 L261.5 53.6 L263.2 52.3" fill="none" stroke="#7a7a7a" stroke-width="0.7"/>
<path d="M231.8 50.3 Q231.3 53.5 232 56 M233.2 51 H234.8 M233 55.5 Q234 56 235.2 55.6" fill="none" stroke="#7a7a7a" stroke-width="0.8"/>
<path d="M236.2 50.5 H239.5 M236.8 50.5 V52 M240.5 50.5 H243.8 M241.1 50.5 V52 M237 52.5 H243 V56.5 H237 Z M237 54 H243 M237 55.3 H243 M238.5 56.5 L236.5 57.5 M241.5 56.5 L243.5 57.5" fill="none" stroke="#7a7a7a" stroke-width="0.65"/>
<path d="M245.3 56.8 V50.3 H248 V52.3 H245.3 M252.5 56.8 V50.3 H249.8 V52.3 H252.5 M247.2 53.6 H250.6 V55.6 H247.2 Z" fill="none" stroke="#7a7a7a" stroke-width="0.7"/>
<path d="M299.5 53 H305.5" stroke="#d6d6d6" stroke-width="0.9"/>
<path d="M317.5 53 H323.5 M320.5 50 V56" stroke="#d6d6d6" stroke-width="0.9"/>
<rect x="335.5" y="50" width="9.5" height="6.5" rx="1" fill="none" stroke="#d6d6d6" stroke-width="0.85"/>
<path d="M337.3 53.2 H343.3 M338.3 52.2 L337.3 53.2 L338.3 54.2 M342.3 52.2 L343.3 53.2 L342.3 54.2" fill="none" stroke="#d6d6d6" stroke-width="0.7"/>
<rect x="355.5" y="44.6" width="20.5" height="16.8" rx="1.6" fill="#3e3e3e" stroke="#5a5a5a" stroke-width="0.9"/>
<path d="M407 51.5 A4 4 0 1 1 412 56.2" fill="none" stroke="#d6d6d6" stroke-width="0.9"/>
<path d="M406.4 49 V51.8 H409.2" fill="none" stroke="#d6d6d6" stroke-width="0.8"/>
<circle cx="410.8" cy="53" r="0.9" fill="#d6d6d6"/>
<path d="M430 50.5 H434.5 V56.5 H430 Z M434.5 52 H439 V56.5 H434.5" fill="none" stroke="#d6d6d6" stroke-width="0.85"/>
<path d="M435 49 L437 49 L438.5 50.5" fill="none" stroke="#d6d6d6" stroke-width="0.7"/>
<circle cx="574.3" cy="52.3" r="2.9" fill="none" stroke="#d6d6d6" stroke-width="0.9"/>
<path d="M576.4 54.4 L578.8 56.8" stroke="#d6d6d6" stroke-width="1"/>
<path d="M596.5 55.2 H595.3 Q594.8 55.2 594.8 54.5 V52.6 Q594.8 50 597.5 49.8 H601 Q603.8 50 603.8 52.6 V54.5 Q603.8 55.2 603.3 55.2 H602" fill="none" stroke="#d6d6d6" stroke-width="0.95"/>
<path d="M595.2 52.5 H603.4" stroke="#d6d6d6" stroke-width="0.9"/>
<rect x="596.9" y="54.1" width="4.8" height="2.9" rx="0.5" fill="none" stroke="#d6d6d6" stroke-width="0.9"/>
<path d="M614.8 49.6 H620.2 L621.9 51.3 V56.6 H614.8 Z M616.3 49.8 V51.9 H619.9 V49.8 M616.3 56.4 V54.2 H620.4 V56.4" fill="none" stroke="#6e6e6e" stroke-width="0.85"/>
<path d="M636.3 56.7 H633.3 V49.8 H638.8 L640.8 51.8 V53.3 M634.8 50 V52 H638.4 V50" fill="none" stroke="#d6d6d6" stroke-width="0.85"/>
<path d="M636.6 57.3 L636.9 55.5 L640.9 51.9 L642.3 53.3 L638.3 57 Z" fill="#d6d6d6"/>
<rect x="652.0" y="52.1" width="1.3" height="1.3" fill="#d6d6d6"/>
<rect x="655.0" y="52.1" width="1.3" height="1.3" fill="#d6d6d6"/>
<rect x="658.0" y="52.1" width="1.3" height="1.3" fill="#d6d6d6"/>
</svg>
<div style="position:absolute;left:40.7px;top:7.4px;will-change:transform;font:6.5px 'Liberation Sans', sans-serif;letter-spacing:-0.19px;color:#f4f4f4;-webkit-text-stroke:0.22px #f4f4f4;white-space:nowrap;line-height:9px">B3_Pro_Building_Instructions.pdf</div>
<div style="position:absolute;left:83px;top:28.2px;font:8.3px 'Liberation Sans', sans-serif;color:#f0f0f0;-webkit-text-stroke:0.1px #f0f0f0;white-space:nowrap;line-height:9px;transform:scaleX(0.86);transform-origin:0 0">C:/B3_Pro_Building_Instructions.pdf</div>
<div style="position:absolute;left:205.7px;top:48.5px;font:8.4px 'Liberation Sans', sans-serif;color:#7c7c7c;white-space:nowrap;line-height:9px;transform:scaleX(0.9);transform-origin:0 0">Copilot</div>
<div style="position:absolute;left:362px;top:49.3px;font:8.2px 'Liberation Sans', sans-serif;color:#ececec;-webkit-text-stroke:0.1px #ececec;white-space:nowrap;line-height:9px;transform:scaleX(0.84);transform-origin:0 0">55</div>
<div style="position:absolute;left:381px;top:49.3px;font:8.2px 'Liberation Sans', sans-serif;color:#ececec;-webkit-text-stroke:0.1px #ececec;white-space:nowrap;line-height:9px;transform:scaleX(0.86);transform-origin:0 0">/ 93</div>
</body></html>
